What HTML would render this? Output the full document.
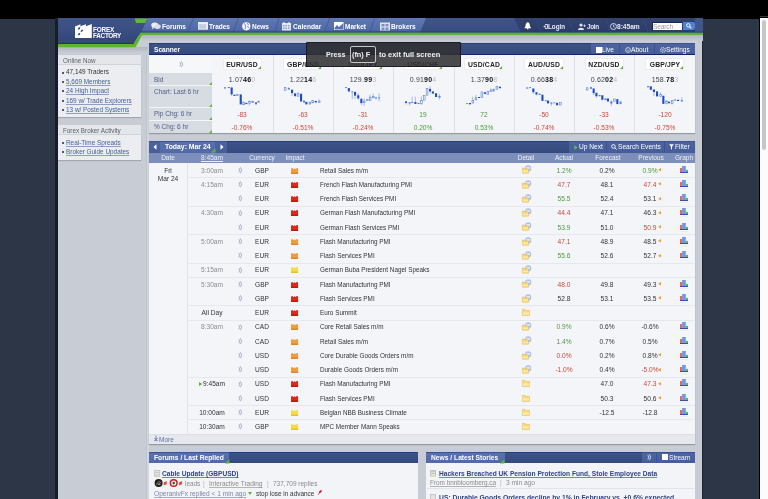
<!DOCTYPE html>
<html><head><meta charset="utf-8">
<style>
*{box-sizing:border-box;margin:0;padding:0}
html,body{-webkit-font-smoothing:antialiased;width:768px;height:499px;overflow:hidden;background:#2c3647;font-family:"Liberation Sans",sans-serif;color:#333;position:relative}
.a{position:absolute}
.t{position:absolute;white-space:nowrap;line-height:10px;height:10px;will-change:transform}
.u{text-decoration:underline}
svg{position:absolute;overflow:visible}
</style></head><body>

<div class="a" style="left:0px;top:0px;width:768px;height:18.5px;background:#000;"></div>
<div class="a" style="left:55px;top:18px;width:3px;height:481px;background:#171d2b;"></div>
<div class="a" style="left:58px;top:18px;width:645px;height:481px;background:#c8ccd4;"></div>
<div class="a" style="left:759px;top:18px;width:1px;height:481px;background:#000;"></div>
<div class="a" style="left:760px;top:18px;width:8px;height:481px;background:#fcfcfc;"></div>
<div class="a" style="left:760px;top:16.3px;width:8px;height:0.8px;background:#3a3a3a;"></div>
<div class="a" style="left:762.3px;top:20px;width:4px;height:129.5px;background:#c6c6c6;border-radius:2px;"></div>
<div class="a" style="left:702.3px;top:18px;width:0.8px;height:481px;background:#1f2633;"></div>
<div class="a" style="left:142px;top:35px;width:561px;height:6px;background:linear-gradient(#b2b6bf,#c8ccd4);"></div>
<div class="a" style="left:58px;top:47px;width:90px;height:6px;background:linear-gradient(#b2b6bf,#c8ccd4);"></div>
<svg class="a" style="left:58px;top:18px" width="645" height="30" viewBox="0 0 645 30">
<defs>
<linearGradient id="gl" x1="0" y1="0" x2="0" y2="1"><stop offset="0" stop-color="#405587"/><stop offset="1" stop-color="#33457a"/></linearGradient>
<linearGradient id="gn" x1="0" y1="0" x2="0" y2="1"><stop offset="0" stop-color="#5f78b4"/><stop offset="1" stop-color="#4d67a6"/></linearGradient>
<linearGradient id="gr" x1="0" y1="0" x2="0" y2="1"><stop offset="0" stop-color="#33436f"/><stop offset="1" stop-color="#2b3a69"/></linearGradient>
<linearGradient id="gm" x1="0" y1="0" x2="0" y2="1"><stop offset="0" stop-color="#40558a"/><stop offset="1" stop-color="#384b80"/></linearGradient>
</defs>
<rect x="0" y="0" width="645" height="17" fill="url(#gr)"/>
<polygon points="360,0 456,0 463,14.5 355,14.5" fill="url(#gm)"/>
<polygon points="89.8,0 368,0 362,14.4 82.6,14.4" fill="url(#gn)"/>
<polygon points="83.7,12.5 362.8,12.5 362,14.4 82.6,14.4" fill="#4d5ba3"/>
<polygon points="0,0 89.8,0 82.6,14.4 75.7,26.2 0,26.2" fill="url(#gl)"/>
<polygon points="0,25 76.4,25 75.7,26.2 0,26.2" fill="#2b2f6c"/>
<polygon points="76.6,0.6 89.4,0.6 87.2,5 78.2,5" fill="#5fb83a"/>
<polygon points="0,26.1 75.5,26.1 82.6,14.4 645,14.4 645,17.1 84.3,17.1 77.5,29.2 0,29.2" fill="#5cb531"/>
<g stroke="#3f5590" stroke-width="0.8">
<line x1="135.6" y1="0" x2="129.9" y2="14.5"/><line x1="180.6" y1="0" x2="174.8" y2="14.5"/>
<line x1="221" y1="0" x2="216.8" y2="14.5"/><line x1="271.8" y1="0" x2="266" y2="14.5"/>
<line x1="316.7" y1="0" x2="311.8" y2="14.5"/>
</g>
<g stroke="#3a4a80" stroke-width="0.8">
<line x1="478" y1="0" x2="482.6" y2="14.5"/><line x1="510.6" y1="0" x2="515.8" y2="14.5"/>
<line x1="548" y1="0" x2="552" y2="14.5"/><line x1="584.8" y1="0" x2="590.6" y2="14.5"/>
</g>
<rect x="637" y="0" width="8" height="14.3" fill="#42568e"/>
<rect x="82.6" y="13.4" width="562.4" height="1" fill="#2c3683" opacity="0.7"/>
</svg>
<svg class="a" style="left:74.8px;top:23.8px" width="17" height="14" viewBox="0 0 17 14">
<polygon points="0,2.6 5.4,0.2 5.4,2.2 11,0.2 11,2.2 16.8,0 16.8,13.9 0,13.9" fill="#fff"/>
<polygon points="3.6,3.6 5.4,3.3 4.6,5.3 2.8,5.6" fill="#23336a"/>
<polygon points="6.4,5.9 8.2,5.6 7.4,7.6 5.6,7.9" fill="#23336a"/>
<polygon points="3.6,9.2 5.4,8.9 4.6,10.9 2.8,11.2" fill="#23336a"/>
</svg>
<div class="t" style="left:92.8px;top:25.20px;font-size:6.4px;font-weight:bold;color:#fff;letter-spacing:-0.2px;">FOREX</div>
<div class="t" style="left:92.8px;top:31.00px;font-size:6.4px;font-weight:bold;color:#fff;letter-spacing:-0.3px;">FACTORY</div>
<div class="t" style="left:161.5px;top:22.20px;font-size:6.5px;font-weight:bold;color:#fff;">Forums</div>
<div class="t" style="left:208.7px;top:22.20px;font-size:6.5px;font-weight:bold;color:#fff;">Trades</div>
<div class="t" style="left:252.3px;top:22.20px;font-size:6.5px;font-weight:bold;color:#fff;">News</div>
<div class="t" style="left:292.7px;top:22.20px;font-size:6.6px;font-weight:bold;color:#fff;">Calendar</div>
<div class="t" style="left:344.5px;top:22.20px;font-size:6.5px;font-weight:bold;color:#fff;">Market</div>
<div class="t" style="left:391.3px;top:22.20px;font-size:6.56px;font-weight:bold;color:#fff;">Brokers</div>
<svg class="a" style="left:150.5px;top:22px" width="10" height="8" viewBox="0 0 10 8"><ellipse cx="3.8" cy="3" rx="3.6" ry="2.6" fill="#eef"/><ellipse cx="6.5" cy="4.6" rx="3.3" ry="2.4" fill="#dde"/><polygon points="1.5,5 1,7.5 3.5,5.3" fill="#eef"/></svg>
<svg class="a" style="left:197.6px;top:22.3px" width="10" height="7.6" viewBox="0 0 10 7.6"><rect x="0.4" y="0.4" width="9.2" height="6.8" fill="#c5cde3" stroke="#f4f6fb" stroke-width="0.8"/><path d="M0.8 1.6 L3 1.2 L5 2 L7 1.3 L9.2 1.1" stroke="#ffffff" stroke-width="0.9" fill="none"/><rect x="8.2" y="0.4" width="1.4" height="6.8" fill="#f4f6fb"/></svg>
<svg class="a" style="left:242.3px;top:22.2px" width="8.6" height="8.6" viewBox="0 0 8.6 8.6"><circle cx="4.3" cy="4.3" r="4.1" fill="#f2f4fa"/><path d="M2 1.6 C3 2.2 3.6 2.4 3.3 3.4 C3 4.2 3.8 4.6 3.6 5.6 L3 7 M5.5 1.2 C5.2 2.2 6 2.8 6.8 2.6 M5 4.6 C5.8 4.4 6.6 5 7 6" stroke="#5a72ae" stroke-width="0.9" fill="none"/></svg>
<svg class="a" style="left:282px;top:22px" width="9" height="8.5" viewBox="0 0 9 8.5"><rect x="0" y="1" width="9" height="7.5" fill="#dfe5f3"/><g fill="#8fa0c8"><rect x="1" y="3" width="1.5" height="1.5"/><rect x="3.5" y="3" width="1.5" height="1.5"/><rect x="6" y="3" width="1.5" height="1.5"/><rect x="1" y="5.5" width="1.5" height="1.5"/><rect x="3.5" y="5.5" width="1.5" height="1.5"/><rect x="6" y="5.5" width="1.5" height="1.5"/></g><rect x="1.5" y="0" width="1" height="2" fill="#fff"/><rect x="6.5" y="0" width="1" height="2" fill="#fff"/></svg>
<svg class="a" style="left:333.7px;top:22px" width="9.5" height="8" viewBox="0 0 9.5 8"><rect x="0" y="0" width="9.5" height="8" fill="#fff"/><path d="M0.5 6 L3 3 L5 5 L9 1.5 L9 7.5 L0.5 7.5Z" fill="#5a72ae"/></svg>
<svg class="a" style="left:379.6px;top:22px" width="10" height="8.5" viewBox="0 0 10 8.5"><rect x="0" y="0.5" width="10" height="8" fill="#dfe5f3"/><rect x="1.5" y="2" width="3" height="2.5" fill="#7b8fc0"/><rect x="5.5" y="2" width="3" height="2.5" fill="#7b8fc0"/><rect x="1.5" y="5.5" width="3" height="2.5" fill="#7b8fc0"/><rect x="5.5" y="5.5" width="3" height="2.5" fill="#7b8fc0"/></svg>
<svg class="a" style="left:523.7px;top:22.2px" width="7.5" height="7.5" viewBox="0 0 7.5 7.5"><path d="M3.75 0.3 C1.5 0.8 1.8 3 1.4 4.5 L0.3 6.2 L7.2 6.2 L6.1 4.5 C5.7 3 6 0.8 3.75 0.3Z" fill="#fff"/><circle cx="3.75" cy="6.8" r="0.8" fill="#fff"/></svg>
<svg class="a" style="left:543.2px;top:23.6px" width="5" height="5" viewBox="0 0 5 5"><path d="M2 0.5 H4.5 V4.5 H2" stroke="#dfe4f0" stroke-width="0.9" fill="none"/><polygon points="0.2,2.5 2.6,0.9 2.6,4.1" fill="#dfe4f0"/></svg>
<div class="t" style="left:548.4px;top:22.20px;font-size:6.3px;font-weight:bold;color:#e6eaf4;">Login</div>
<svg class="a" style="left:577.7px;top:22.5px" width="8" height="7" viewBox="0 0 8 7"><circle cx="3" cy="2" r="1.6" fill="#dfe4f0"/><path d="M0 7 C0 4 6 4 6 7Z" fill="#dfe4f0"/><path d="M6.5 1.5 V4 M5.3 2.7 H7.7" stroke="#dfe4f0" stroke-width="0.8"/></svg>
<div class="t" style="left:586.75px;top:22.20px;font-size:6.4px;font-weight:bold;color:#e6eaf4;letter-spacing:-0.35px;">Join</div>
<svg class="a" style="left:609.6px;top:22.8px" width="7" height="7" viewBox="0 0 7 7"><circle cx="3.5" cy="3.5" r="3" fill="none" stroke="#dfe4f0" stroke-width="0.9"/><path d="M3.5 1.6 V3.6 L5 4.3" stroke="#dfe4f0" stroke-width="0.8" fill="none"/></svg>
<div class="t" style="left:617.4px;top:22.20px;font-size:6.6px;font-weight:bold;color:#e6eaf4;">8:45am</div>
<div class="a" style="left:651.9px;top:21.9px;width:30.6px;height:8.5px;background:#fff;border-top:0.8px solid #1a2550;border-left:0.8px solid #1a2550;"></div>
<div class="t" style="left:653.4px;top:21.70px;font-size:6.5px;font-weight:normal;color:#9a9a9a;letter-spacing:-0.1px;">Search</div>
<div class="a" style="left:682.5px;top:21.9px;width:12.3px;height:8.5px;background:#4d82d4;border-radius:0 2px 2px 0;"></div>
<svg class="a" style="left:685.5px;top:23.3px" width="6" height="6" viewBox="0 0 6 6"><circle cx="2.3" cy="2.3" r="1.7" fill="none" stroke="#fff" stroke-width="0.9"/><path d="M3.5 3.5 L5.3 5.3" stroke="#fff" stroke-width="1.1"/></svg>
<div class="a" style="left:58px;top:55.1px;width:83px;height:10.3px;background:#e4e6ea;border-bottom:1px solid #cfd3da;"></div>
<div class="t" style="left:62.7px;top:56.05px;font-size:6.3px;font-weight:normal;color:#5a5f68;">Online Now</div>
<div class="a" style="left:58px;top:65.4px;width:83px;height:51.69999999999999px;background:#ebedf0;box-shadow:0 1px 1px rgba(0,0,0,0.18);"></div>
<div class="a" style="left:61.5px;top:72px;width:2px;height:2px;background:#5a5a5a;"></div>
<div class="t" style="left:66.1px;top:67.30px;font-size:6.4px;font-weight:normal;color:#333;">47,149 Traders</div>
<div class="a" style="left:61.5px;top:81px;width:2px;height:2px;background:#5a5a5a;"></div>
<div class="t" style="left:66.1px;top:76.80px;font-size:6.4px;font-weight:normal;color:#45609a;text-decoration:underline;text-decoration-color:#8f9fc4;">5,669 Members</div>
<div class="a" style="left:61.5px;top:90px;width:2px;height:2px;background:#5a5a5a;"></div>
<div class="t" style="left:66.1px;top:86.20px;font-size:6.4px;font-weight:normal;color:#45609a;text-decoration:underline;text-decoration-color:#8f9fc4;">24 High Impact</div>
<div class="a" style="left:61.5px;top:100px;width:2px;height:2px;background:#5a5a5a;"></div>
<div class="t" style="left:66.1px;top:95.60px;font-size:6.4px;font-weight:normal;color:#45609a;text-decoration:underline;text-decoration-color:#8f9fc4;">169 w/ Trade Explorers</div>
<div class="a" style="left:61.5px;top:109px;width:2px;height:2px;background:#5a5a5a;"></div>
<div class="t" style="left:66.1px;top:105.00px;font-size:6.4px;font-weight:normal;color:#45609a;text-decoration:underline;text-decoration-color:#8f9fc4;">13 w/ Posted Systems</div>
<div class="a" style="left:58px;top:125.1px;width:83px;height:10.1px;background:#e4e6ea;border-bottom:1px solid #cfd3da;"></div>
<div class="t" style="left:62.7px;top:125.95px;font-size:6.3px;font-weight:normal;color:#5a5f68;">Forex Broker Activity</div>
<div class="a" style="left:58px;top:135.2px;width:83px;height:24.800000000000004px;background:#ebedf0;box-shadow:0 1px 1px rgba(0,0,0,0.18);"></div>
<div class="a" style="left:61.5px;top:142px;width:2px;height:2px;background:#5a5a5a;"></div>
<div class="t" style="left:66.1px;top:137.50px;font-size:6.4px;font-weight:normal;color:#45609a;text-decoration:underline;text-decoration-color:#8f9fc4;">Real-Time Spreads</div>
<div class="a" style="left:61.5px;top:151px;width:2px;height:2px;background:#5a5a5a;"></div>
<div class="t" style="left:66.1px;top:146.60px;font-size:6.4px;font-weight:normal;color:#45609a;text-decoration:underline;text-decoration-color:#8f9fc4;">Broker Guide Updates</div>
<div class="a" style="left:146.3px;top:55px;width:1px;height:444px;background:#bfc3cb;"></div>
<div class="a" style="left:147.3px;top:55px;width:1.5px;height:444px;background:#d2d6dd;"></div>
<div class="a" style="left:148.8px;top:54.8px;width:546.0px;height:78.39999999999998px;background:#f3f5f8;box-shadow:0 1px 1px rgba(0,0,0,0.25);"></div>
<div class="a" style="left:148.8px;top:43.4px;width:546.0px;height:11.4px;background:linear-gradient(#3d5388,#34497e);border-top:1px solid #223f7a;"></div>
<div class="t" style="left:153.5px;top:45.00px;font-size:6.6px;font-weight:bold;color:#fff;">Scanner</div>
<div class="a" style="left:590.9px;top:43.4px;width:103.89999999999998px;height:11.4px;background:linear-gradient(#4d64a0,#465d99);border-top:1px solid #3a5290;"></div>
<div class="a" style="left:619px;top:44.4px;width:0.8px;height:10.4px;background:#3b5190;"></div>
<div class="a" style="left:654.2px;top:44.4px;width:0.8px;height:10.4px;background:#3b5190;"></div>
<div class="a" style="left:595.6px;top:46.6px;width:6.2px;height:6px;background:#fff;"></div>
<div class="t" style="left:602.3px;top:45.20px;font-size:6.5px;font-weight:normal;color:#fff;">Live</div>
<svg class="a" style="left:624.5px;top:46.5px" width="6" height="6" viewBox="0 0 6 6"><circle cx="3" cy="3" r="2.4" fill="none" stroke="#dfe4f0" stroke-width="0.8"/><rect x="2.6" y="2.4" width="0.8" height="2" fill="#dfe4f0"/></svg>
<div class="t" style="left:631.2px;top:45.20px;font-size:6.6px;font-weight:normal;color:#fff;">About</div>
<svg class="a" style="left:659.7px;top:46.5px" width="6" height="6" viewBox="0 0 6 6"><circle cx="3" cy="3" r="2.3" fill="none" stroke="#dfe4f0" stroke-width="1.1" stroke-dasharray="1 0.6"/><circle cx="3" cy="3" r="0.8" fill="#dfe4f0"/></svg>
<div class="t" style="left:666px;top:45.20px;font-size:6.6px;font-weight:normal;color:#fff;">Settings</div>
<div class="a" style="left:148.8px;top:53.9px;width:546.0px;height:0.9px;background:#13236e;"></div>
<div class="a" style="left:148.8px;top:54.8px;width:63.39999999999998px;height:17.9px;background:#f6f7f9;"></div>
<div class="a" style="left:148.8px;top:73.3px;width:63.39999999999998px;height:11.999999999999995px;background:#d7dbe2;"></div>
<svg class="a" style="left:208.7px;top:82.3px" width="3" height="3" viewBox="0 0 3 3"><polygon points="3,0 3,3 0,3" fill="#5cb531"/></svg>
<div class="a" style="left:148.8px;top:85.89999999999999px;width:63.39999999999998px;height:21.1px;background:#d7dbe2;"></div>
<svg class="a" style="left:208.7px;top:104.0px" width="3" height="3" viewBox="0 0 3 3"><polygon points="3,0 3,3 0,3" fill="#5cb531"/></svg>
<div class="a" style="left:148.8px;top:107.6px;width:63.39999999999998px;height:12.300000000000006px;background:#d7dbe2;"></div>
<svg class="a" style="left:208.7px;top:116.9px" width="3" height="3" viewBox="0 0 3 3"><polygon points="3,0 3,3 0,3" fill="#5cb531"/></svg>
<div class="a" style="left:148.8px;top:120.5px;width:63.39999999999998px;height:12.699999999999983px;background:#d7dbe2;"></div>
<svg class="a" style="left:208.7px;top:130.2px" width="3" height="3" viewBox="0 0 3 3"><polygon points="3,0 3,3 0,3" fill="#5cb531"/></svg>
<div class="t" style="left:153.5px;top:74.80px;font-size:6.5px;font-weight:normal;color:#4e5d84;">Bid</div>
<div class="t" style="left:153.5px;top:87.30px;font-size:6.5px;font-weight:normal;color:#4e5d84;">Chart: Last 6 hr</div>
<div class="t" style="left:153.5px;top:109.40px;font-size:6.5px;font-weight:normal;color:#4e5d84;">Pip Chg: 6 hr</div>
<div class="t" style="left:153.5px;top:122.40px;font-size:6.5px;font-weight:normal;color:#4e5d84;">% Chg: 6 hr</div>
<svg class="a" style="left:178.5px;top:60.5px" width="5" height="7" viewBox="0 0 5 7"><path d="M0.9 1.2 Q2.5 3.2 0.9 5.4" stroke="#9aa6c2" stroke-width="0.9" fill="none"/><path d="M2.4 0.4 Q5 3.2 2.4 6.2" stroke="#9aa6c2" stroke-width="0.9" fill="none"/></svg>
<div class="a" style="left:223.7625px;top:58.9px;width:37.2px;height:10.1px;background:#fff;box-shadow:0 0 0 0.5px #e3e6ec;"></div>
<svg class="a" style="left:257.9625px;top:66px" width="3" height="3" viewBox="0 0 3 3"><polygon points="3,0 3,3 0,3" fill="#5cb531"/></svg>
<div class="t" style="left:92.36249999999998px;width:300px;text-align:center;top:59.80px;font-size:6.8px;font-weight:bold;color:#222;letter-spacing:0.15px;">EUR/USD</div>
<div class="t" style="left:92.36249999999998px;width:300px;text-align:center;top:75.10px;font-size:7.0px;font-weight:normal;color:#444;letter-spacing:0.2px;">1.07<b style="color:#111">46</b><span style="color:#bbb">0</span></div>
<div class="t" style="left:92.36249999999998px;width:300px;text-align:center;top:110.20px;font-size:6.6px;font-weight:normal;color:#c9483b;">-83</div>
<div class="t" style="left:92.36249999999998px;width:300px;text-align:center;top:122.80px;font-size:6.6px;font-weight:normal;color:#c9483b;">-0.76%</div>
<div class="a" style="left:272.525px;top:54.8px;width:0.8px;height:78.39999999999999px;background:#dde1e8;"></div>
<div class="a" style="left:284.0875px;top:58.9px;width:37.2px;height:10.1px;background:#fff;box-shadow:0 0 0 0.5px #e3e6ec;"></div>
<svg class="a" style="left:318.2875px;top:66px" width="3" height="3" viewBox="0 0 3 3"><polygon points="3,0 3,3 0,3" fill="#5cb531"/></svg>
<div class="t" style="left:152.6875px;width:300px;text-align:center;top:59.80px;font-size:6.8px;font-weight:bold;color:#222;letter-spacing:0.15px;">GBP/USD</div>
<div class="t" style="left:152.6875px;width:300px;text-align:center;top:75.10px;font-size:7.0px;font-weight:normal;color:#444;letter-spacing:0.2px;">1.22<b style="color:#111">14</b><span style="color:#bbb">6</span></div>
<div class="t" style="left:152.6875px;width:300px;text-align:center;top:110.20px;font-size:6.6px;font-weight:normal;color:#c9483b;">-63</div>
<div class="t" style="left:152.6875px;width:300px;text-align:center;top:122.80px;font-size:6.6px;font-weight:normal;color:#c9483b;">-0.51%</div>
<div class="a" style="left:332.84999999999997px;top:54.8px;width:0.8px;height:78.39999999999999px;background:#dde1e8;"></div>
<div class="a" style="left:344.41249999999997px;top:58.9px;width:37.2px;height:10.1px;background:#fff;box-shadow:0 0 0 0.5px #e3e6ec;"></div>
<svg class="a" style="left:378.6125px;top:66px" width="3" height="3" viewBox="0 0 3 3"><polygon points="3,0 3,3 0,3" fill="#5cb531"/></svg>
<div class="t" style="left:213.0125px;width:300px;text-align:center;top:59.80px;font-size:6.8px;font-weight:bold;color:#222;letter-spacing:0.15px;">USD/JPY</div>
<div class="t" style="left:213.0125px;width:300px;text-align:center;top:75.10px;font-size:7.0px;font-weight:normal;color:#444;letter-spacing:0.2px;">129.<b style="color:#111">99</b><span style="color:#bbb">3</span></div>
<div class="t" style="left:213.0125px;width:300px;text-align:center;top:110.20px;font-size:6.6px;font-weight:normal;color:#c9483b;">-31</div>
<div class="t" style="left:213.0125px;width:300px;text-align:center;top:122.80px;font-size:6.6px;font-weight:normal;color:#c9483b;">-0.24%</div>
<div class="a" style="left:393.17499999999995px;top:54.8px;width:0.8px;height:78.39999999999999px;background:#dde1e8;"></div>
<div class="a" style="left:404.73749999999995px;top:58.9px;width:37.2px;height:10.1px;background:#fff;box-shadow:0 0 0 0.5px #e3e6ec;"></div>
<svg class="a" style="left:438.9375px;top:66px" width="3" height="3" viewBox="0 0 3 3"><polygon points="3,0 3,3 0,3" fill="#5cb531"/></svg>
<div class="t" style="left:273.3375px;width:300px;text-align:center;top:59.80px;font-size:6.8px;font-weight:bold;color:#222;letter-spacing:0.15px;">USD/CHF</div>
<div class="t" style="left:273.3375px;width:300px;text-align:center;top:75.10px;font-size:7.0px;font-weight:normal;color:#444;letter-spacing:0.2px;">0.91<b style="color:#111">90</b><span style="color:#bbb">4</span></div>
<div class="t" style="left:273.3375px;width:300px;text-align:center;top:110.20px;font-size:6.6px;font-weight:normal;color:#4d9a3c;">19</div>
<div class="t" style="left:273.3375px;width:300px;text-align:center;top:122.80px;font-size:6.6px;font-weight:normal;color:#4d9a3c;">0.20%</div>
<div class="a" style="left:453.5px;top:54.8px;width:0.8px;height:78.39999999999999px;background:#dde1e8;"></div>
<div class="a" style="left:465.0625px;top:58.9px;width:37.2px;height:10.1px;background:#fff;box-shadow:0 0 0 0.5px #e3e6ec;"></div>
<svg class="a" style="left:499.26250000000005px;top:66px" width="3" height="3" viewBox="0 0 3 3"><polygon points="3,0 3,3 0,3" fill="#5cb531"/></svg>
<div class="t" style="left:333.6625px;width:300px;text-align:center;top:59.80px;font-size:6.8px;font-weight:bold;color:#222;letter-spacing:0.15px;">USD/CAD</div>
<div class="t" style="left:333.6625px;width:300px;text-align:center;top:75.10px;font-size:7.0px;font-weight:normal;color:#444;letter-spacing:0.2px;">1.37<b style="color:#111">90</b><span style="color:#bbb">8</span></div>
<div class="t" style="left:333.6625px;width:300px;text-align:center;top:110.20px;font-size:6.6px;font-weight:normal;color:#4d9a3c;">72</div>
<div class="t" style="left:333.6625px;width:300px;text-align:center;top:122.80px;font-size:6.6px;font-weight:normal;color:#4d9a3c;">0.53%</div>
<div class="a" style="left:513.825px;top:54.8px;width:0.8px;height:78.39999999999999px;background:#dde1e8;"></div>
<div class="a" style="left:525.3875px;top:58.9px;width:37.2px;height:10.1px;background:#fff;box-shadow:0 0 0 0.5px #e3e6ec;"></div>
<svg class="a" style="left:559.5875000000001px;top:66px" width="3" height="3" viewBox="0 0 3 3"><polygon points="3,0 3,3 0,3" fill="#5cb531"/></svg>
<div class="t" style="left:393.98750000000007px;width:300px;text-align:center;top:59.80px;font-size:6.8px;font-weight:bold;color:#222;letter-spacing:0.15px;">AUD/USD</div>
<div class="t" style="left:393.98750000000007px;width:300px;text-align:center;top:75.10px;font-size:7.0px;font-weight:normal;color:#444;letter-spacing:0.2px;">0.66<b style="color:#111">38</b><span style="color:#bbb">4</span></div>
<div class="t" style="left:393.98750000000007px;width:300px;text-align:center;top:110.20px;font-size:6.6px;font-weight:normal;color:#c9483b;">-50</div>
<div class="t" style="left:393.98750000000007px;width:300px;text-align:center;top:122.80px;font-size:6.6px;font-weight:normal;color:#c9483b;">-0.74%</div>
<div class="a" style="left:574.15px;top:54.8px;width:0.8px;height:78.39999999999999px;background:#dde1e8;"></div>
<div class="a" style="left:585.7125px;top:58.9px;width:37.2px;height:10.1px;background:#fff;box-shadow:0 0 0 0.5px #e3e6ec;"></div>
<svg class="a" style="left:619.9125px;top:66px" width="3" height="3" viewBox="0 0 3 3"><polygon points="3,0 3,3 0,3" fill="#5cb531"/></svg>
<div class="t" style="left:454.3125px;width:300px;text-align:center;top:59.80px;font-size:6.8px;font-weight:bold;color:#222;letter-spacing:0.15px;">NZD/USD</div>
<div class="t" style="left:454.3125px;width:300px;text-align:center;top:75.10px;font-size:7.0px;font-weight:normal;color:#444;letter-spacing:0.2px;">0.62<b style="color:#111">02</b><span style="color:#bbb">4</span></div>
<div class="t" style="left:454.3125px;width:300px;text-align:center;top:110.20px;font-size:6.6px;font-weight:normal;color:#c9483b;">-33</div>
<div class="t" style="left:454.3125px;width:300px;text-align:center;top:122.80px;font-size:6.6px;font-weight:normal;color:#c9483b;">-0.53%</div>
<div class="a" style="left:634.4749999999999px;top:54.8px;width:0.8px;height:78.39999999999999px;background:#dde1e8;"></div>
<div class="a" style="left:646.0374999999999px;top:58.9px;width:37.2px;height:10.1px;background:#fff;box-shadow:0 0 0 0.5px #e3e6ec;"></div>
<svg class="a" style="left:680.2375px;top:66px" width="3" height="3" viewBox="0 0 3 3"><polygon points="3,0 3,3 0,3" fill="#5cb531"/></svg>
<div class="t" style="left:514.6374999999999px;width:300px;text-align:center;top:59.80px;font-size:6.8px;font-weight:bold;color:#222;letter-spacing:0.15px;">GBP/JPY</div>
<div class="t" style="left:514.6374999999999px;width:300px;text-align:center;top:75.10px;font-size:7.0px;font-weight:normal;color:#444;letter-spacing:0.2px;">158.<b style="color:#111">78</b><span style="color:#bbb">3</span></div>
<div class="t" style="left:514.6374999999999px;width:300px;text-align:center;top:110.20px;font-size:6.6px;font-weight:normal;color:#c9483b;">-120</div>
<div class="t" style="left:514.6374999999999px;width:300px;text-align:center;top:122.80px;font-size:6.6px;font-weight:normal;color:#c9483b;">-0.75%</div>
<svg class="a" style="left:224px;top:86.5px" width="40" height="20" viewBox="0 0 40 20"><rect x="0" y="0.3" width="2" height="1.2" fill="#4a72d4"/><rect x="3.8" y="0" width="2" height="1.1" fill="#4a72d4"/><line x1="7.6" y1="0.5" x2="7.6" y2="8.9" stroke="#6a88d6" stroke-width="0.55"/><rect x="6.6" y="0.5" width="2.1" height="6.9" fill="#1a4ccc"/><rect x="9.4" y="7.7" width="2.1" height="1.2000000000000002" fill="#1a4ccc"/><rect x="12.55" y="7.35" width="1.7" height="1.3000000000000007" fill="#e8eefa" stroke="#5f82d6" stroke-width="0.6"/><rect x="15.7" y="7.4" width="2.1" height="9.999999999999998" fill="#1a4ccc"/><rect x="18.8" y="15.15" width="1.7" height="2.5999999999999996" fill="#e8eefa" stroke="#5f82d6" stroke-width="0.6"/><rect x="21.3" y="15.8" width="2.1" height="1.3000000000000007" fill="#1a4ccc"/><line x1="25.4" y1="13.9" x2="25.4" y2="18.6" stroke="#6a88d6" stroke-width="0.55"/><rect x="24.7" y="14.15" width="1.7" height="2.3499999999999996" fill="#e8eefa" stroke="#5f82d6" stroke-width="0.6"/><rect x="27.6" y="14.25" width="2.1" height="1.25" fill="#1a4ccc"/><rect x="31" y="15.2" width="2" height="2.1999999999999993" fill="#4a72d4"/><rect x="33.8" y="14.15" width="1.7" height="1.0999999999999996" fill="#e8eefa" stroke="#5f82d6" stroke-width="0.6"/></svg>
<svg class="a" style="left:284px;top:86.5px" width="40" height="20" viewBox="0 0 40 20"><rect x="0.3" y="0.45" width="1.7" height="2.9" fill="#e8eefa" stroke="#5f82d6" stroke-width="0.6"/><line x1="4.8" y1="0.2" x2="4.8" y2="2.1" stroke="#6a88d6" stroke-width="0.55"/><rect x="3.8" y="1.4" width="2.1" height="1" fill="#1a4ccc"/><line x1="8" y1="2.7" x2="8" y2="8.9" stroke="#6a88d6" stroke-width="0.55"/><rect x="7" y="2.7" width="2.1" height="3.3999999999999995" fill="#1a4ccc"/><rect x="10" y="6.4" width="2.1" height="2.8499999999999996" fill="#1a4ccc"/><rect x="13.200000000000001" y="6.05" width="1.7" height="3.2" fill="#e8eefa" stroke="#5f82d6" stroke-width="0.6"/><rect x="16" y="6.75" width="2.1" height="7.75" fill="#1a4ccc"/><rect x="19.1" y="13.6" width="2" height="1.9000000000000004" fill="#4a72d4"/><rect x="21.3" y="14.9" width="2.1" height="2.4999999999999982" fill="#1a4ccc"/><line x1="25.75" y1="14.9" x2="25.75" y2="18" stroke="#6a88d6" stroke-width="0.55"/><rect x="25.05" y="15.15" width="1.7" height="1.700000000000001" fill="#e8eefa" stroke="#5f82d6" stroke-width="0.6"/><rect x="27.900000000000002" y="13.55" width="1.7" height="2.3000000000000007" fill="#e8eefa" stroke="#5f82d6" stroke-width="0.6"/><rect x="30.7" y="13.9" width="2.1" height="1.5999999999999996" fill="#1a4ccc"/><line x1="35.1" y1="12.1" x2="35.1" y2="15.5" stroke="#6a88d6" stroke-width="0.55"/><rect x="34.4" y="14.15" width="1.7" height="1.0999999999999996" fill="#e8eefa" stroke="#5f82d6" stroke-width="0.6"/></svg>
<svg class="a" style="left:345px;top:86.5px" width="40" height="20" viewBox="0 0 40 20"><rect x="0" y="0.2" width="2" height="0.9000000000000001" fill="#4a72d4"/><rect x="2.8" y="1.1" width="2.1" height="3.4" fill="#1a4ccc"/><line x1="7.25" y1="4.5" x2="7.25" y2="12.1" stroke="#6a88d6" stroke-width="0.55"/><rect x="6.25" y="4.5" width="2" height="0.8" fill="#4a72d4"/><line x1="10" y1="4.9" x2="10" y2="12.1" stroke="#6a88d6" stroke-width="0.55"/><rect x="9" y="4.9" width="2.1" height="3.6999999999999993" fill="#1a4ccc"/><line x1="13.2" y1="6.1" x2="13.2" y2="12.7" stroke="#6a88d6" stroke-width="0.55"/><rect x="12.2" y="8.3" width="2.1" height="3.0999999999999996" fill="#1a4ccc"/><line x1="16.3" y1="11.75" x2="16.3" y2="18" stroke="#6a88d6" stroke-width="0.55"/><rect x="15.3" y="11.75" width="2.1" height="4.350000000000001" fill="#1a4ccc"/><line x1="19.1" y1="11.4" x2="19.1" y2="18.9" stroke="#6a88d6" stroke-width="0.55"/><rect x="18.400000000000002" y="14.15" width="1.7" height="1.4000000000000004" fill="#e8eefa" stroke="#5f82d6" stroke-width="0.6"/><rect x="21.55" y="12.35" width="1.7" height="1.3000000000000007" fill="#e8eefa" stroke="#5f82d6" stroke-width="0.6"/><line x1="25" y1="7.7" x2="25" y2="13.9" stroke="#6a88d6" stroke-width="0.55"/><rect x="24.3" y="10.15" width="1.7" height="3.5" fill="#e8eefa" stroke="#5f82d6" stroke-width="0.6"/><line x1="28.2" y1="6.75" x2="28.2" y2="11.1" stroke="#6a88d6" stroke-width="0.55"/><rect x="27.5" y="9.5" width="1.7" height="1.3499999999999996" fill="#e8eefa" stroke="#5f82d6" stroke-width="0.6"/><line x1="31" y1="10" x2="31" y2="12.7" stroke="#6a88d6" stroke-width="0.55"/><rect x="30" y="10.5" width="2" height="0.8" fill="#4a72d4"/><line x1="34.1" y1="6.4" x2="34.1" y2="14.25" stroke="#6a88d6" stroke-width="0.55"/><rect x="33.1" y="10.5" width="2" height="0.8" fill="#4a72d4"/></svg>
<svg class="a" style="left:405.4px;top:86px" width="40" height="20" viewBox="0 0 40 20"><line x1="1" y1="15.4" x2="1" y2="18.5" stroke="#6a88d6" stroke-width="0.55"/><rect x="0" y="15.4" width="2.1" height="1.4999999999999982" fill="#1a4ccc"/><line x1="4.7" y1="16.3" x2="4.7" y2="19.4" stroke="#6a88d6" stroke-width="0.55"/><rect x="3.7" y="16.3" width="2" height="1.1999999999999993" fill="#4a72d4"/><line x1="7.2" y1="10.7" x2="7.2" y2="16.9" stroke="#6a88d6" stroke-width="0.55"/><rect x="6.2" y="16" width="2" height="0.8999999999999986" fill="#4a72d4"/><line x1="10.35" y1="10.7" x2="10.35" y2="17.9" stroke="#6a88d6" stroke-width="0.55"/><rect x="9.35" y="16" width="2.1" height="1.8999999999999986" fill="#1a4ccc"/><rect x="12.5" y="16.9" width="2" height="1.0" fill="#4a72d4"/><line x1="16.3" y1="10.4" x2="16.3" y2="19" stroke="#6a88d6" stroke-width="0.55"/><rect x="15.600000000000001" y="14.65" width="1.7" height="2.700000000000001" fill="#e8eefa" stroke="#5f82d6" stroke-width="0.6"/><rect x="18.400000000000002" y="9.65" width="1.7" height="4.5" fill="#e8eefa" stroke="#5f82d6" stroke-width="0.6"/><rect x="21.2" y="2.5" width="1.7" height="6.65" fill="#e8eefa" stroke="#5f82d6" stroke-width="0.6"/><line x1="25" y1="0.4" x2="25" y2="7.5" stroke="#6a88d6" stroke-width="0.55"/><rect x="24" y="2.9" width="2.1" height="2.5000000000000004" fill="#1a4ccc"/><rect x="26.85" y="5.4" width="2.1" height="2.1999999999999993" fill="#1a4ccc"/><rect x="30" y="7.25" width="2.1" height="3.75" fill="#1a4ccc"/><line x1="34.4" y1="8" x2="34.4" y2="13.5" stroke="#6a88d6" stroke-width="0.55"/><rect x="33.699999999999996" y="10.25" width="1.7" height="1.0999999999999996" fill="#e8eefa" stroke="#5f82d6" stroke-width="0.6"/></svg>
<svg class="a" style="left:466px;top:86px" width="40" height="20" viewBox="0 0 40 20"><rect x="0" y="17.25" width="2" height="0.8" fill="#4a72d4"/><line x1="3.9" y1="17" x2="3.9" y2="19" stroke="#6a88d6" stroke-width="0.55"/><rect x="2.9" y="17" width="2.1" height="1.1999999999999993" fill="#1a4ccc"/><line x1="6.7" y1="10.7" x2="6.7" y2="17.25" stroke="#6a88d6" stroke-width="0.55"/><rect x="6.0" y="14.35" width="1.7" height="2.6500000000000004" fill="#e8eefa" stroke="#5f82d6" stroke-width="0.6"/><line x1="9.8" y1="9.1" x2="9.8" y2="14.1" stroke="#6a88d6" stroke-width="0.55"/><rect x="9.100000000000001" y="11.85" width="1.7" height="2.0" fill="#e8eefa" stroke="#5f82d6" stroke-width="0.6"/><rect x="12" y="11" width="2.1" height="1" fill="#1a4ccc"/><rect x="15.05" y="5.95" width="1.7" height="5.3999999999999995" fill="#e8eefa" stroke="#5f82d6" stroke-width="0.6"/><rect x="17.9" y="6.3" width="2.1" height="1.6000000000000005" fill="#1a4ccc"/><rect x="21.0" y="5.65" width="1.7" height="2.5999999999999996" fill="#e8eefa" stroke="#5f82d6" stroke-width="0.6"/><line x1="24.8" y1="2.25" x2="24.8" y2="5.7" stroke="#6a88d6" stroke-width="0.55"/><rect x="24.1" y="4.05" width="1.7" height="1.4000000000000004" fill="#e8eefa" stroke="#5f82d6" stroke-width="0.6"/><rect x="26.900000000000002" y="3.15" width="1.7" height="2.0000000000000004" fill="#e8eefa" stroke="#5f82d6" stroke-width="0.6"/><rect x="30.05" y="0.65" width="1.7" height="2.6" fill="#e8eefa" stroke="#5f82d6" stroke-width="0.6"/><rect x="32.9" y="0.7" width="2.1" height="1.55" fill="#1a4ccc"/></svg>
<svg class="a" style="left:526px;top:86.5px" width="40" height="20" viewBox="0 0 40 20"><rect x="0.3" y="0.75" width="1.7" height="0.75" fill="#e8eefa" stroke="#5f82d6" stroke-width="0.6"/><rect x="3.2" y="0.2" width="2" height="0.9000000000000001" fill="#4a72d4"/><line x1="7.3" y1="1.5" x2="7.3" y2="6.75" stroke="#6a88d6" stroke-width="0.55"/><rect x="6.3" y="1.5" width="2.1" height="3.7" fill="#1a4ccc"/><line x1="10.4" y1="5.2" x2="10.4" y2="8.6" stroke="#6a88d6" stroke-width="0.55"/><rect x="9.4" y="5.2" width="2.1" height="2.2" fill="#1a4ccc"/><rect x="12.6" y="6.75" width="2" height="1.25" fill="#4a72d4"/><rect x="15.4" y="7.7" width="2.1" height="6.2" fill="#1a4ccc"/><rect x="18.8" y="13.3" width="2" height="0.9499999999999993" fill="#4a72d4"/><rect x="21" y="13.6" width="2.1" height="2.799999999999999" fill="#1a4ccc"/><line x1="25.4" y1="15.5" x2="25.4" y2="18.9" stroke="#6a88d6" stroke-width="0.55"/><rect x="24.4" y="15.5" width="2" height="1.0" fill="#4a72d4"/><rect x="27.25" y="15.5" width="2" height="0.8" fill="#4a72d4"/><rect x="30" y="15.8" width="2.1" height="2.5" fill="#1a4ccc"/><rect x="33.5" y="15.45" width="1.7" height="2.6000000000000014" fill="#e8eefa" stroke="#5f82d6" stroke-width="0.6"/></svg>
<svg class="a" style="left:586.4px;top:86.5px" width="40" height="20" viewBox="0 0 40 20"><rect x="0.3" y="0.75" width="1.7" height="2.3" fill="#e8eefa" stroke="#5f82d6" stroke-width="0.6"/><rect x="4" y="0.2" width="2" height="1.55" fill="#4a72d4"/><line x1="7.6" y1="1.5" x2="7.6" y2="8" stroke="#6a88d6" stroke-width="0.55"/><rect x="6.6" y="1.5" width="2.1" height="4.6" fill="#1a4ccc"/><line x1="10.35" y1="5.8" x2="10.35" y2="10.8" stroke="#6a88d6" stroke-width="0.55"/><rect x="9.35" y="5.8" width="2.1" height="3.45" fill="#1a4ccc"/><rect x="12.8" y="8.25" width="1.7" height="0.75" fill="#e8eefa" stroke="#5f82d6" stroke-width="0.6"/><line x1="16.3" y1="8.3" x2="16.3" y2="13.6" stroke="#6a88d6" stroke-width="0.55"/><rect x="15.3" y="8.3" width="2.1" height="4.399999999999999" fill="#1a4ccc"/><rect x="18.7" y="11.75" width="1.7" height="1.0" fill="#e8eefa" stroke="#5f82d6" stroke-width="0.6"/><rect x="20.9" y="11.5" width="2.1" height="3.0" fill="#1a4ccc"/><line x1="25.35" y1="13.3" x2="25.35" y2="18.9" stroke="#6a88d6" stroke-width="0.55"/><rect x="24.35" y="14.5" width="2" height="2.0" fill="#4a72d4"/><rect x="27.5" y="12.0" width="1.7" height="2.25" fill="#e8eefa" stroke="#5f82d6" stroke-width="0.6"/><rect x="30.3" y="12.1" width="2.1" height="5.000000000000002" fill="#1a4ccc"/><rect x="33.8" y="14.75" width="1.7" height="2.1000000000000014" fill="#e8eefa" stroke="#5f82d6" stroke-width="0.6"/></svg>
<svg class="a" style="left:647px;top:86px" width="40" height="20" viewBox="0 0 40 20"><rect x="0.3" y="0.25" width="1.7" height="0.8" fill="#e8eefa" stroke="#5f82d6" stroke-width="0.6"/><rect x="2.8" y="0.4" width="2.1" height="3.4" fill="#1a4ccc"/><line x1="6.9" y1="3.5" x2="6.9" y2="10" stroke="#6a88d6" stroke-width="0.55"/><rect x="5.9" y="3.5" width="2.1" height="2.5" fill="#1a4ccc"/><rect x="9" y="5.4" width="2.1" height="5.0" fill="#1a4ccc"/><line x1="13.5" y1="6.6" x2="13.5" y2="10.7" stroke="#6a88d6" stroke-width="0.55"/><rect x="12.8" y="8.45" width="1.7" height="2.0" fill="#e8eefa" stroke="#5f82d6" stroke-width="0.6"/><rect x="15.3" y="9.75" width="2.1" height="8.149999999999999" fill="#1a4ccc"/><line x1="19.4" y1="14.75" x2="19.4" y2="18.5" stroke="#6a88d6" stroke-width="0.55"/><rect x="18.7" y="15.0" width="1.7" height="2.3500000000000014" fill="#e8eefa" stroke="#5f82d6" stroke-width="0.6"/><rect x="21" y="15.7" width="2.1" height="1.5500000000000007" fill="#1a4ccc"/><line x1="25" y1="14.1" x2="25" y2="18.5" stroke="#6a88d6" stroke-width="0.55"/><rect x="24.3" y="14.35" width="1.7" height="3.0000000000000018" fill="#e8eefa" stroke="#5f82d6" stroke-width="0.6"/><rect x="27.2" y="13.75" width="1.7" height="0.75" fill="#e8eefa" stroke="#5f82d6" stroke-width="0.6"/><rect x="30" y="13.8" width="2.1" height="1.1999999999999993" fill="#1a4ccc"/><line x1="34.75" y1="11.6" x2="34.75" y2="15.4" stroke="#6a88d6" stroke-width="0.55"/><rect x="34.05" y="14.25" width="1.7" height="0.9000000000000004" fill="#e8eefa" stroke="#5f82d6" stroke-width="0.6"/></svg>
<div class="a" style="left:148.8px;top:140.9px;width:546.0px;height:302.79999999999995px;background:#f4f5f9;box-shadow:0 1px 1px rgba(0,0,0,0.25);"></div>
<div class="a" style="left:148.8px;top:140.9px;width:546.0px;height:11.7px;background:linear-gradient(#3d5388,#34497e);border-top:1px solid #223f7a;"></div>
<div class="a" style="left:148.8px;top:140.9px;width:11.6px;height:11.7px;background:linear-gradient(#4d64a0,#465d99);border-top:1px solid #3a5290;"></div>
<div class="a" style="left:160.4px;top:140.9px;width:54.9px;height:11.7px;background:linear-gradient(#5972ae,#5169a6);border-top:1px solid #3a5290;"></div>
<div class="a" style="left:215.3px;top:140.9px;width:11.7px;height:11.7px;background:linear-gradient(#4d64a0,#465d99);border-top:1px solid #3a5290;"></div>
<svg class="a" style="left:152.5px;top:144px" width="4" height="6" viewBox="0 0 4 6"><polygon points="3.5,0.3 3.5,5.7 0.5,3" fill="#fff"/></svg>
<svg class="a" style="left:219.5px;top:144px" width="4" height="6" viewBox="0 0 4 6"><polygon points="0.5,0.3 0.5,5.7 3.5,3" fill="#fff"/></svg>
<svg class="a" style="left:210.8px;top:148.2px" width="4.5" height="4.5" viewBox="0 0 3 3"><polygon points="3,0 3,3 0,3" fill="#5cb531"/></svg>
<div class="t" style="left:165.0px;top:142.20px;font-size:6.85px;font-weight:bold;color:#fff;">Today: Mar 24</div>
<div class="a" style="left:569px;top:140.9px;width:125.79999999999995px;height:11.7px;background:linear-gradient(#4d64a0,#465d99);border-top:1px solid #3a5290;"></div>
<div class="a" style="left:605.5px;top:141.9px;width:0.8px;height:10.7px;background:#3b5190;"></div>
<div class="a" style="left:663.5px;top:141.9px;width:0.8px;height:10.7px;background:#3b5190;"></div>
<svg class="a" style="left:573.5px;top:144.5px" width="4" height="5" viewBox="0 0 4 5"><polygon points="0.3,0.3 0.3,4.7 3.7,2.5" fill="#5cc23a"/></svg>
<div class="t" style="left:578.5px;top:142.20px;font-size:6.6px;font-weight:normal;color:#fff;">Up Next</div>
<svg class="a" style="left:610.5px;top:143.8px" width="6" height="6" viewBox="0 0 6 6"><circle cx="2.4" cy="2.4" r="1.8" fill="none" stroke="#fff" stroke-width="0.9"/><path d="M3.7 3.7 L5.6 5.6" stroke="#fff" stroke-width="1"/></svg>
<div class="t" style="left:617.5px;top:142.20px;font-size:6.6px;font-weight:normal;color:#fff;">Search Events</div>
<svg class="a" style="left:668.5px;top:144px" width="5" height="6" viewBox="0 0 5 6"><path d="M0.2 0.3 H4.8 L3 2.8 V5.7 L2 5 V2.8Z" fill="#fff"/></svg>
<div class="t" style="left:674.5px;top:142.20px;font-size:6.6px;font-weight:normal;color:#fff;">Filter</div>
<div class="a" style="left:148.8px;top:152.6px;width:546.0px;height:10.200000000000017px;background:#7c8eb9;"></div>
<div class="t" style="left:17.900000000000006px;width:300px;text-align:center;top:152.80px;font-size:6.5px;font-weight:normal;color:#eef1f8;">Date</div>
<div class="t" style="left:61.599999999999994px;width:300px;text-align:center;top:152.80px;font-size:6.6px;font-weight:normal;color:#eef1f8;text-decoration:underline;">8:45am</div>
<div class="t" style="left:112.10000000000002px;width:300px;text-align:center;top:152.80px;font-size:6.3px;font-weight:normal;color:#eef1f8;">Currency</div>
<div class="t" style="left:144.89999999999998px;width:300px;text-align:center;top:152.80px;font-size:6.4px;font-weight:normal;color:#eef1f8;">Impact</div>
<div class="t" style="left:376px;width:300px;text-align:center;top:152.80px;font-size:6.4px;font-weight:normal;color:#eef1f8;">Detail</div>
<div class="t" style="left:413.79999999999995px;width:300px;text-align:center;top:152.80px;font-size:6.5px;font-weight:normal;color:#eef1f8;">Actual</div>
<div class="t" style="left:457.6px;width:300px;text-align:center;top:152.80px;font-size:6.5px;font-weight:normal;color:#eef1f8;">Forecast</div>
<div class="t" style="left:501px;width:300px;text-align:center;top:152.80px;font-size:6.5px;font-weight:normal;color:#eef1f8;">Previous</div>
<div class="t" style="left:533.6px;width:300px;text-align:center;top:152.80px;font-size:6.5px;font-weight:normal;color:#eef1f8;">Graph</div>
<div class="a" style="left:186.6px;top:162.8px;width:0.8px;height:270.75px;background:#e1e4eb;"></div>
<div class="t" style="left:17.599999999999994px;width:300px;text-align:center;top:166.40px;font-size:6.6px;font-weight:normal;color:#333;">Fri</div>
<div class="t" style="left:17.599999999999994px;width:300px;text-align:center;top:174.00px;font-size:6.6px;font-weight:normal;color:#333;">Mar 24</div>
<div class="t" style="left:61.900000000000006px;width:300px;text-align:center;top:165.73px;font-size:6.6px;font-weight:normal;color:#8c8c8c;">3:00am</div>
<svg class="a" style="left:237.5px;top:166.925px" width="5" height="7" viewBox="0 0 5 7"><path d="M0.9 1.2 Q2.5 3.2 0.9 5.4" stroke="#9aa6c2" stroke-width="0.9" fill="none"/><path d="M2.4 0.4 Q5 3.2 2.4 6.2" stroke="#9aa6c2" stroke-width="0.9" fill="none"/></svg>
<div class="t" style="left:112.10000000000002px;width:300px;text-align:center;top:165.73px;font-size:6.6px;font-weight:normal;color:#333;">GBP</div>
<svg class="a" style="left:290.9px;top:167.625px" width="7.1" height="5.9" viewBox="0 0 7.1 5.9"><rect x="0" y="1" width="7.1" height="4.9" fill="#f09c40"/><rect x="0" y="4.6" width="7.1" height="1.3" fill="#d9832a"/><rect x="0.2" y="0.1" width="1.6" height="1.2" fill="#f09c40"/><rect x="2.75" y="0.4" width="1.6" height="1" fill="#f09c40"/><rect x="5.3" y="0" width="1.6" height="1.2" fill="#f09c40"/></svg>
<div class="t" style="left:320px;top:165.73px;font-size:6.35px;font-weight:normal;color:#333;">Retail Sales m/m</div>
<svg class="a" style="left:522px;top:165.425px" width="9.5" height="8.5" viewBox="0 0 9.5 8.5"><circle cx="6.2" cy="3.4" r="3.1" fill="#aec3ea"/><rect x="4.4" y="2.2" width="3.6" height="1.6" fill="#eef3fb"/><path d="M0.3 3 H2.6 L3.2 3.8 H6.6 V8.2 H0.3Z" fill="#f6d67a" stroke="#e2b25a" stroke-width="0.5"/><rect x="0.8" y="5.5" width="5.4" height="1.8" fill="#fdeaa6"/></svg>
<div class="t" style="left:413.79999999999995px;width:300px;text-align:center;top:165.73px;font-size:6.6px;font-weight:normal;color:#4d9a3c;">1.2%</div>
<div class="t" style="left:457.4px;width:300px;text-align:center;top:165.73px;font-size:6.6px;font-weight:normal;color:#333;">0.2%</div>
<div class="t" style="left:499.5px;width:300px;text-align:center;top:165.73px;font-size:6.6px;font-weight:normal;color:#4d9a3c;">0.9%</div>
<svg class="a" style="left:658.3px;top:168.125px" width="3" height="3.6" viewBox="0 0 3 3.6"><polygon points="3,0 3,3.6 0,1.8" fill="#f0a030"/></svg>
<svg class="a" style="left:680px;top:165.625px" width="8.5" height="9" viewBox="0 0 8.5 9"><rect x="0" y="2" width="2" height="5" fill="#e8685a"/><rect x="2.1" y="0" width="3.7" height="7" fill="#6a9ae8"/><rect x="5.8" y="3.9" width="2.2" height="3.1" fill="#6ab04a"/><rect x="0" y="6.2" width="8" height="0.8" fill="#2a3ab0"/><rect x="0" y="8.4" width="8" height="0.5" fill="#e2e5ee"/></svg>
<div class="a" style="left:186.6px;top:177.05px;width:508.19999999999993px;height:0.8px;background:#e6e8ee;"></div>
<div class="t" style="left:61.900000000000006px;width:300px;text-align:center;top:179.98px;font-size:6.6px;font-weight:normal;color:#8c8c8c;">4:15am</div>
<svg class="a" style="left:237.5px;top:181.175px" width="5" height="7" viewBox="0 0 5 7"><path d="M0.9 1.2 Q2.5 3.2 0.9 5.4" stroke="#9aa6c2" stroke-width="0.9" fill="none"/><path d="M2.4 0.4 Q5 3.2 2.4 6.2" stroke="#9aa6c2" stroke-width="0.9" fill="none"/></svg>
<div class="t" style="left:112.10000000000002px;width:300px;text-align:center;top:179.98px;font-size:6.6px;font-weight:normal;color:#333;">EUR</div>
<svg class="a" style="left:290.9px;top:181.875px" width="7.1" height="5.9" viewBox="0 0 7.1 5.9"><rect x="0" y="1" width="7.1" height="4.9" fill="#da2a1c"/><rect x="0" y="4.6" width="7.1" height="1.3" fill="#b51812"/><rect x="0.2" y="0.1" width="1.6" height="1.2" fill="#da2a1c"/><rect x="2.75" y="0.4" width="1.6" height="1" fill="#da2a1c"/><rect x="5.3" y="0" width="1.6" height="1.2" fill="#da2a1c"/></svg>
<div class="t" style="left:320px;top:179.98px;font-size:6.35px;font-weight:normal;color:#333;">French Flash Manufacturing PMI</div>
<svg class="a" style="left:522px;top:179.675px" width="9.5" height="8.5" viewBox="0 0 9.5 8.5"><circle cx="6.2" cy="3.4" r="3.1" fill="#aec3ea"/><rect x="4.4" y="2.2" width="3.6" height="1.6" fill="#eef3fb"/><path d="M0.3 3 H2.6 L3.2 3.8 H6.6 V8.2 H0.3Z" fill="#f6d67a" stroke="#e2b25a" stroke-width="0.5"/><rect x="0.8" y="5.5" width="5.4" height="1.8" fill="#fdeaa6"/></svg>
<div class="t" style="left:413.79999999999995px;width:300px;text-align:center;top:179.98px;font-size:6.6px;font-weight:normal;color:#c9483b;">47.7</div>
<div class="t" style="left:457.4px;width:300px;text-align:center;top:179.98px;font-size:6.6px;font-weight:normal;color:#333;">48.1</div>
<div class="t" style="left:499.5px;width:300px;text-align:center;top:179.98px;font-size:6.6px;font-weight:normal;color:#c9483b;">47.4</div>
<svg class="a" style="left:658.3px;top:182.375px" width="3" height="3.6" viewBox="0 0 3 3.6"><polygon points="3,0 3,3.6 0,1.8" fill="#f0a030"/></svg>
<svg class="a" style="left:680px;top:179.875px" width="8.5" height="9" viewBox="0 0 8.5 9"><rect x="0" y="2" width="2" height="5" fill="#e8685a"/><rect x="2.1" y="0" width="3.7" height="7" fill="#6a9ae8"/><rect x="5.8" y="3.9" width="2.2" height="3.1" fill="#6ab04a"/><rect x="0" y="6.2" width="8" height="0.8" fill="#2a3ab0"/><rect x="0" y="8.4" width="8" height="0.5" fill="#e2e5ee"/></svg>
<svg class="a" style="left:237.5px;top:195.425px" width="5" height="7" viewBox="0 0 5 7"><path d="M0.9 1.2 Q2.5 3.2 0.9 5.4" stroke="#9aa6c2" stroke-width="0.9" fill="none"/><path d="M2.4 0.4 Q5 3.2 2.4 6.2" stroke="#9aa6c2" stroke-width="0.9" fill="none"/></svg>
<div class="t" style="left:112.10000000000002px;width:300px;text-align:center;top:194.23px;font-size:6.6px;font-weight:normal;color:#333;">EUR</div>
<svg class="a" style="left:290.9px;top:196.125px" width="7.1" height="5.9" viewBox="0 0 7.1 5.9"><rect x="0" y="1" width="7.1" height="4.9" fill="#da2a1c"/><rect x="0" y="4.6" width="7.1" height="1.3" fill="#b51812"/><rect x="0.2" y="0.1" width="1.6" height="1.2" fill="#da2a1c"/><rect x="2.75" y="0.4" width="1.6" height="1" fill="#da2a1c"/><rect x="5.3" y="0" width="1.6" height="1.2" fill="#da2a1c"/></svg>
<div class="t" style="left:320px;top:194.23px;font-size:6.35px;font-weight:normal;color:#333;">French Flash Services PMI</div>
<svg class="a" style="left:522px;top:193.925px" width="9.5" height="8.5" viewBox="0 0 9.5 8.5"><circle cx="6.2" cy="3.4" r="3.1" fill="#aec3ea"/><rect x="4.4" y="2.2" width="3.6" height="1.6" fill="#eef3fb"/><path d="M0.3 3 H2.6 L3.2 3.8 H6.6 V8.2 H0.3Z" fill="#f6d67a" stroke="#e2b25a" stroke-width="0.5"/><rect x="0.8" y="5.5" width="5.4" height="1.8" fill="#fdeaa6"/></svg>
<div class="t" style="left:413.79999999999995px;width:300px;text-align:center;top:194.23px;font-size:6.6px;font-weight:normal;color:#4d9a3c;">55.5</div>
<div class="t" style="left:457.4px;width:300px;text-align:center;top:194.23px;font-size:6.6px;font-weight:normal;color:#333;">52.4</div>
<div class="t" style="left:499.5px;width:300px;text-align:center;top:194.23px;font-size:6.6px;font-weight:normal;color:#333;">53.1</div>
<svg class="a" style="left:658.3px;top:196.625px" width="3" height="3.6" viewBox="0 0 3 3.6"><polygon points="3,0 3,3.6 0,1.8" fill="#f0a030"/></svg>
<svg class="a" style="left:680px;top:194.125px" width="8.5" height="9" viewBox="0 0 8.5 9"><rect x="0" y="2" width="2" height="5" fill="#e8685a"/><rect x="2.1" y="0" width="3.7" height="7" fill="#6a9ae8"/><rect x="5.8" y="3.9" width="2.2" height="3.1" fill="#6ab04a"/><rect x="0" y="6.2" width="8" height="0.8" fill="#2a3ab0"/><rect x="0" y="8.4" width="8" height="0.5" fill="#e2e5ee"/></svg>
<div class="a" style="left:186.6px;top:205.55px;width:508.19999999999993px;height:0.8px;background:#e6e8ee;"></div>
<div class="t" style="left:61.900000000000006px;width:300px;text-align:center;top:208.48px;font-size:6.6px;font-weight:normal;color:#8c8c8c;">4:30am</div>
<svg class="a" style="left:237.5px;top:209.675px" width="5" height="7" viewBox="0 0 5 7"><path d="M0.9 1.2 Q2.5 3.2 0.9 5.4" stroke="#9aa6c2" stroke-width="0.9" fill="none"/><path d="M2.4 0.4 Q5 3.2 2.4 6.2" stroke="#9aa6c2" stroke-width="0.9" fill="none"/></svg>
<div class="t" style="left:112.10000000000002px;width:300px;text-align:center;top:208.48px;font-size:6.6px;font-weight:normal;color:#333;">EUR</div>
<svg class="a" style="left:290.9px;top:210.375px" width="7.1" height="5.9" viewBox="0 0 7.1 5.9"><rect x="0" y="1" width="7.1" height="4.9" fill="#da2a1c"/><rect x="0" y="4.6" width="7.1" height="1.3" fill="#b51812"/><rect x="0.2" y="0.1" width="1.6" height="1.2" fill="#da2a1c"/><rect x="2.75" y="0.4" width="1.6" height="1" fill="#da2a1c"/><rect x="5.3" y="0" width="1.6" height="1.2" fill="#da2a1c"/></svg>
<div class="t" style="left:320px;top:208.48px;font-size:6.35px;font-weight:normal;color:#333;">German Flash Manufacturing PMI</div>
<svg class="a" style="left:522px;top:208.175px" width="9.5" height="8.5" viewBox="0 0 9.5 8.5"><circle cx="6.2" cy="3.4" r="3.1" fill="#aec3ea"/><rect x="4.4" y="2.2" width="3.6" height="1.6" fill="#eef3fb"/><path d="M0.3 3 H2.6 L3.2 3.8 H6.6 V8.2 H0.3Z" fill="#f6d67a" stroke="#e2b25a" stroke-width="0.5"/><rect x="0.8" y="5.5" width="5.4" height="1.8" fill="#fdeaa6"/></svg>
<div class="t" style="left:413.79999999999995px;width:300px;text-align:center;top:208.48px;font-size:6.6px;font-weight:normal;color:#c9483b;">44.4</div>
<div class="t" style="left:457.4px;width:300px;text-align:center;top:208.48px;font-size:6.6px;font-weight:normal;color:#333;">47.1</div>
<div class="t" style="left:499.5px;width:300px;text-align:center;top:208.48px;font-size:6.6px;font-weight:normal;color:#333;">46.3</div>
<svg class="a" style="left:658.3px;top:210.875px" width="3" height="3.6" viewBox="0 0 3 3.6"><polygon points="3,0 3,3.6 0,1.8" fill="#f0a030"/></svg>
<svg class="a" style="left:680px;top:208.375px" width="8.5" height="9" viewBox="0 0 8.5 9"><rect x="0" y="2" width="2" height="5" fill="#e8685a"/><rect x="2.1" y="0" width="3.7" height="7" fill="#6a9ae8"/><rect x="5.8" y="3.9" width="2.2" height="3.1" fill="#6ab04a"/><rect x="0" y="6.2" width="8" height="0.8" fill="#2a3ab0"/><rect x="0" y="8.4" width="8" height="0.5" fill="#e2e5ee"/></svg>
<svg class="a" style="left:237.5px;top:223.925px" width="5" height="7" viewBox="0 0 5 7"><path d="M0.9 1.2 Q2.5 3.2 0.9 5.4" stroke="#9aa6c2" stroke-width="0.9" fill="none"/><path d="M2.4 0.4 Q5 3.2 2.4 6.2" stroke="#9aa6c2" stroke-width="0.9" fill="none"/></svg>
<div class="t" style="left:112.10000000000002px;width:300px;text-align:center;top:222.73px;font-size:6.6px;font-weight:normal;color:#333;">EUR</div>
<svg class="a" style="left:290.9px;top:224.625px" width="7.1" height="5.9" viewBox="0 0 7.1 5.9"><rect x="0" y="1" width="7.1" height="4.9" fill="#da2a1c"/><rect x="0" y="4.6" width="7.1" height="1.3" fill="#b51812"/><rect x="0.2" y="0.1" width="1.6" height="1.2" fill="#da2a1c"/><rect x="2.75" y="0.4" width="1.6" height="1" fill="#da2a1c"/><rect x="5.3" y="0" width="1.6" height="1.2" fill="#da2a1c"/></svg>
<div class="t" style="left:320px;top:222.73px;font-size:6.35px;font-weight:normal;color:#333;">German Flash Services PMI</div>
<svg class="a" style="left:522px;top:222.425px" width="9.5" height="8.5" viewBox="0 0 9.5 8.5"><circle cx="6.2" cy="3.4" r="3.1" fill="#aec3ea"/><rect x="4.4" y="2.2" width="3.6" height="1.6" fill="#eef3fb"/><path d="M0.3 3 H2.6 L3.2 3.8 H6.6 V8.2 H0.3Z" fill="#f6d67a" stroke="#e2b25a" stroke-width="0.5"/><rect x="0.8" y="5.5" width="5.4" height="1.8" fill="#fdeaa6"/></svg>
<div class="t" style="left:413.79999999999995px;width:300px;text-align:center;top:222.73px;font-size:6.6px;font-weight:normal;color:#4d9a3c;">53.9</div>
<div class="t" style="left:457.4px;width:300px;text-align:center;top:222.73px;font-size:6.6px;font-weight:normal;color:#333;">51.0</div>
<div class="t" style="left:499.5px;width:300px;text-align:center;top:222.73px;font-size:6.6px;font-weight:normal;color:#c9483b;">50.9</div>
<svg class="a" style="left:658.3px;top:225.125px" width="3" height="3.6" viewBox="0 0 3 3.6"><polygon points="3,0 3,3.6 0,1.8" fill="#f0a030"/></svg>
<svg class="a" style="left:680px;top:222.625px" width="8.5" height="9" viewBox="0 0 8.5 9"><rect x="0" y="2" width="2" height="5" fill="#e8685a"/><rect x="2.1" y="0" width="3.7" height="7" fill="#6a9ae8"/><rect x="5.8" y="3.9" width="2.2" height="3.1" fill="#6ab04a"/><rect x="0" y="6.2" width="8" height="0.8" fill="#2a3ab0"/><rect x="0" y="8.4" width="8" height="0.5" fill="#e2e5ee"/></svg>
<div class="a" style="left:186.6px;top:234.05px;width:508.19999999999993px;height:0.8px;background:#e6e8ee;"></div>
<div class="t" style="left:61.900000000000006px;width:300px;text-align:center;top:236.98px;font-size:6.6px;font-weight:normal;color:#8c8c8c;">5:00am</div>
<svg class="a" style="left:237.5px;top:238.175px" width="5" height="7" viewBox="0 0 5 7"><path d="M0.9 1.2 Q2.5 3.2 0.9 5.4" stroke="#9aa6c2" stroke-width="0.9" fill="none"/><path d="M2.4 0.4 Q5 3.2 2.4 6.2" stroke="#9aa6c2" stroke-width="0.9" fill="none"/></svg>
<div class="t" style="left:112.10000000000002px;width:300px;text-align:center;top:236.98px;font-size:6.6px;font-weight:normal;color:#333;">EUR</div>
<svg class="a" style="left:290.9px;top:238.875px" width="7.1" height="5.9" viewBox="0 0 7.1 5.9"><rect x="0" y="1" width="7.1" height="4.9" fill="#f09c40"/><rect x="0" y="4.6" width="7.1" height="1.3" fill="#d9832a"/><rect x="0.2" y="0.1" width="1.6" height="1.2" fill="#f09c40"/><rect x="2.75" y="0.4" width="1.6" height="1" fill="#f09c40"/><rect x="5.3" y="0" width="1.6" height="1.2" fill="#f09c40"/></svg>
<div class="t" style="left:320px;top:236.98px;font-size:6.35px;font-weight:normal;color:#333;">Flash Manufacturing PMI</div>
<svg class="a" style="left:522px;top:236.675px" width="9.5" height="8.5" viewBox="0 0 9.5 8.5"><circle cx="6.2" cy="3.4" r="3.1" fill="#aec3ea"/><rect x="4.4" y="2.2" width="3.6" height="1.6" fill="#eef3fb"/><path d="M0.3 3 H2.6 L3.2 3.8 H6.6 V8.2 H0.3Z" fill="#f6d67a" stroke="#e2b25a" stroke-width="0.5"/><rect x="0.8" y="5.5" width="5.4" height="1.8" fill="#fdeaa6"/></svg>
<div class="t" style="left:413.79999999999995px;width:300px;text-align:center;top:236.98px;font-size:6.6px;font-weight:normal;color:#c9483b;">47.1</div>
<div class="t" style="left:457.4px;width:300px;text-align:center;top:236.98px;font-size:6.6px;font-weight:normal;color:#333;">48.9</div>
<div class="t" style="left:499.5px;width:300px;text-align:center;top:236.98px;font-size:6.6px;font-weight:normal;color:#333;">48.5</div>
<svg class="a" style="left:658.3px;top:239.375px" width="3" height="3.6" viewBox="0 0 3 3.6"><polygon points="3,0 3,3.6 0,1.8" fill="#f0a030"/></svg>
<svg class="a" style="left:680px;top:236.875px" width="8.5" height="9" viewBox="0 0 8.5 9"><rect x="0" y="2" width="2" height="5" fill="#e8685a"/><rect x="2.1" y="0" width="3.7" height="7" fill="#6a9ae8"/><rect x="5.8" y="3.9" width="2.2" height="3.1" fill="#6ab04a"/><rect x="0" y="6.2" width="8" height="0.8" fill="#2a3ab0"/><rect x="0" y="8.4" width="8" height="0.5" fill="#e2e5ee"/></svg>
<svg class="a" style="left:237.5px;top:252.425px" width="5" height="7" viewBox="0 0 5 7"><path d="M0.9 1.2 Q2.5 3.2 0.9 5.4" stroke="#9aa6c2" stroke-width="0.9" fill="none"/><path d="M2.4 0.4 Q5 3.2 2.4 6.2" stroke="#9aa6c2" stroke-width="0.9" fill="none"/></svg>
<div class="t" style="left:112.10000000000002px;width:300px;text-align:center;top:251.23px;font-size:6.6px;font-weight:normal;color:#333;">EUR</div>
<svg class="a" style="left:290.9px;top:253.125px" width="7.1" height="5.9" viewBox="0 0 7.1 5.9"><rect x="0" y="1" width="7.1" height="4.9" fill="#f09c40"/><rect x="0" y="4.6" width="7.1" height="1.3" fill="#d9832a"/><rect x="0.2" y="0.1" width="1.6" height="1.2" fill="#f09c40"/><rect x="2.75" y="0.4" width="1.6" height="1" fill="#f09c40"/><rect x="5.3" y="0" width="1.6" height="1.2" fill="#f09c40"/></svg>
<div class="t" style="left:320px;top:251.23px;font-size:6.35px;font-weight:normal;color:#333;">Flash Services PMI</div>
<svg class="a" style="left:522px;top:250.925px" width="9.5" height="8.5" viewBox="0 0 9.5 8.5"><circle cx="6.2" cy="3.4" r="3.1" fill="#aec3ea"/><rect x="4.4" y="2.2" width="3.6" height="1.6" fill="#eef3fb"/><path d="M0.3 3 H2.6 L3.2 3.8 H6.6 V8.2 H0.3Z" fill="#f6d67a" stroke="#e2b25a" stroke-width="0.5"/><rect x="0.8" y="5.5" width="5.4" height="1.8" fill="#fdeaa6"/></svg>
<div class="t" style="left:413.79999999999995px;width:300px;text-align:center;top:251.23px;font-size:6.6px;font-weight:normal;color:#4d9a3c;">55.6</div>
<div class="t" style="left:457.4px;width:300px;text-align:center;top:251.23px;font-size:6.6px;font-weight:normal;color:#333;">52.6</div>
<div class="t" style="left:499.5px;width:300px;text-align:center;top:251.23px;font-size:6.6px;font-weight:normal;color:#333;">52.7</div>
<svg class="a" style="left:658.3px;top:253.625px" width="3" height="3.6" viewBox="0 0 3 3.6"><polygon points="3,0 3,3.6 0,1.8" fill="#f0a030"/></svg>
<svg class="a" style="left:680px;top:251.125px" width="8.5" height="9" viewBox="0 0 8.5 9"><rect x="0" y="2" width="2" height="5" fill="#e8685a"/><rect x="2.1" y="0" width="3.7" height="7" fill="#6a9ae8"/><rect x="5.8" y="3.9" width="2.2" height="3.1" fill="#6ab04a"/><rect x="0" y="6.2" width="8" height="0.8" fill="#2a3ab0"/><rect x="0" y="8.4" width="8" height="0.5" fill="#e2e5ee"/></svg>
<div class="a" style="left:186.6px;top:262.55px;width:508.19999999999993px;height:0.8px;background:#e6e8ee;"></div>
<div class="t" style="left:61.900000000000006px;width:300px;text-align:center;top:265.48px;font-size:6.6px;font-weight:normal;color:#8c8c8c;">5:15am</div>
<svg class="a" style="left:237.5px;top:266.675px" width="5" height="7" viewBox="0 0 5 7"><path d="M0.9 1.2 Q2.5 3.2 0.9 5.4" stroke="#9aa6c2" stroke-width="0.9" fill="none"/><path d="M2.4 0.4 Q5 3.2 2.4 6.2" stroke="#9aa6c2" stroke-width="0.9" fill="none"/></svg>
<div class="t" style="left:112.10000000000002px;width:300px;text-align:center;top:265.48px;font-size:6.6px;font-weight:normal;color:#333;">EUR</div>
<svg class="a" style="left:290.9px;top:267.375px" width="7.1" height="5.9" viewBox="0 0 7.1 5.9"><rect x="0" y="1" width="7.1" height="4.9" fill="#f4dc48"/><rect x="0" y="4.6" width="7.1" height="1.3" fill="#dcc035"/><rect x="0.2" y="0.1" width="1.6" height="1.2" fill="#f4dc48"/><rect x="2.75" y="0.4" width="1.6" height="1" fill="#f4dc48"/><rect x="5.3" y="0" width="1.6" height="1.2" fill="#f4dc48"/></svg>
<div class="t" style="left:320px;top:265.48px;font-size:6.35px;font-weight:normal;color:#333;">German Buba President Nagel Speaks</div>
<svg class="a" style="left:522px;top:265.175px" width="9.5" height="8.5" viewBox="0 0 9.5 8.5"><circle cx="6.2" cy="3.4" r="3.1" fill="#aec3ea"/><rect x="4.4" y="2.2" width="3.6" height="1.6" fill="#eef3fb"/><path d="M0.3 3 H2.6 L3.2 3.8 H6.6 V8.2 H0.3Z" fill="#f6d67a" stroke="#e2b25a" stroke-width="0.5"/><rect x="0.8" y="5.5" width="5.4" height="1.8" fill="#fdeaa6"/></svg>
<div class="a" style="left:186.6px;top:276.8px;width:508.19999999999993px;height:0.8px;background:#e6e8ee;"></div>
<div class="t" style="left:61.900000000000006px;width:300px;text-align:center;top:279.73px;font-size:6.6px;font-weight:normal;color:#8c8c8c;">5:30am</div>
<svg class="a" style="left:237.5px;top:280.925px" width="5" height="7" viewBox="0 0 5 7"><path d="M0.9 1.2 Q2.5 3.2 0.9 5.4" stroke="#9aa6c2" stroke-width="0.9" fill="none"/><path d="M2.4 0.4 Q5 3.2 2.4 6.2" stroke="#9aa6c2" stroke-width="0.9" fill="none"/></svg>
<div class="t" style="left:112.10000000000002px;width:300px;text-align:center;top:279.73px;font-size:6.6px;font-weight:normal;color:#333;">GBP</div>
<svg class="a" style="left:290.9px;top:281.625px" width="7.1" height="5.9" viewBox="0 0 7.1 5.9"><rect x="0" y="1" width="7.1" height="4.9" fill="#da2a1c"/><rect x="0" y="4.6" width="7.1" height="1.3" fill="#b51812"/><rect x="0.2" y="0.1" width="1.6" height="1.2" fill="#da2a1c"/><rect x="2.75" y="0.4" width="1.6" height="1" fill="#da2a1c"/><rect x="5.3" y="0" width="1.6" height="1.2" fill="#da2a1c"/></svg>
<div class="t" style="left:320px;top:279.73px;font-size:6.35px;font-weight:normal;color:#333;">Flash Manufacturing PMI</div>
<svg class="a" style="left:522px;top:279.425px" width="9.5" height="8.5" viewBox="0 0 9.5 8.5"><circle cx="6.2" cy="3.4" r="3.1" fill="#aec3ea"/><rect x="4.4" y="2.2" width="3.6" height="1.6" fill="#eef3fb"/><path d="M0.3 3 H2.6 L3.2 3.8 H6.6 V8.2 H0.3Z" fill="#f6d67a" stroke="#e2b25a" stroke-width="0.5"/><rect x="0.8" y="5.5" width="5.4" height="1.8" fill="#fdeaa6"/></svg>
<div class="t" style="left:413.79999999999995px;width:300px;text-align:center;top:279.73px;font-size:6.6px;font-weight:normal;color:#c9483b;">48.0</div>
<div class="t" style="left:457.4px;width:300px;text-align:center;top:279.73px;font-size:6.6px;font-weight:normal;color:#333;">49.8</div>
<div class="t" style="left:499.5px;width:300px;text-align:center;top:279.73px;font-size:6.6px;font-weight:normal;color:#333;">49.3</div>
<svg class="a" style="left:658.3px;top:282.125px" width="3" height="3.6" viewBox="0 0 3 3.6"><polygon points="3,0 3,3.6 0,1.8" fill="#f0a030"/></svg>
<svg class="a" style="left:680px;top:279.625px" width="8.5" height="9" viewBox="0 0 8.5 9"><rect x="0" y="2" width="2" height="5" fill="#e8685a"/><rect x="2.1" y="0" width="3.7" height="7" fill="#6a9ae8"/><rect x="5.8" y="3.9" width="2.2" height="3.1" fill="#6ab04a"/><rect x="0" y="6.2" width="8" height="0.8" fill="#2a3ab0"/><rect x="0" y="8.4" width="8" height="0.5" fill="#e2e5ee"/></svg>
<svg class="a" style="left:237.5px;top:295.175px" width="5" height="7" viewBox="0 0 5 7"><path d="M0.9 1.2 Q2.5 3.2 0.9 5.4" stroke="#9aa6c2" stroke-width="0.9" fill="none"/><path d="M2.4 0.4 Q5 3.2 2.4 6.2" stroke="#9aa6c2" stroke-width="0.9" fill="none"/></svg>
<div class="t" style="left:112.10000000000002px;width:300px;text-align:center;top:293.98px;font-size:6.6px;font-weight:normal;color:#333;">GBP</div>
<svg class="a" style="left:290.9px;top:295.875px" width="7.1" height="5.9" viewBox="0 0 7.1 5.9"><rect x="0" y="1" width="7.1" height="4.9" fill="#da2a1c"/><rect x="0" y="4.6" width="7.1" height="1.3" fill="#b51812"/><rect x="0.2" y="0.1" width="1.6" height="1.2" fill="#da2a1c"/><rect x="2.75" y="0.4" width="1.6" height="1" fill="#da2a1c"/><rect x="5.3" y="0" width="1.6" height="1.2" fill="#da2a1c"/></svg>
<div class="t" style="left:320px;top:293.98px;font-size:6.35px;font-weight:normal;color:#333;">Flash Services PMI</div>
<svg class="a" style="left:522px;top:293.675px" width="9.5" height="8.5" viewBox="0 0 9.5 8.5"><circle cx="6.2" cy="3.4" r="3.1" fill="#aec3ea"/><rect x="4.4" y="2.2" width="3.6" height="1.6" fill="#eef3fb"/><path d="M0.3 3 H2.6 L3.2 3.8 H6.6 V8.2 H0.3Z" fill="#f6d67a" stroke="#e2b25a" stroke-width="0.5"/><rect x="0.8" y="5.5" width="5.4" height="1.8" fill="#fdeaa6"/></svg>
<div class="t" style="left:413.79999999999995px;width:300px;text-align:center;top:293.98px;font-size:6.6px;font-weight:normal;color:#333;">52.8</div>
<div class="t" style="left:457.4px;width:300px;text-align:center;top:293.98px;font-size:6.6px;font-weight:normal;color:#333;">53.1</div>
<div class="t" style="left:499.5px;width:300px;text-align:center;top:293.98px;font-size:6.6px;font-weight:normal;color:#333;">53.5</div>
<svg class="a" style="left:658.3px;top:296.375px" width="3" height="3.6" viewBox="0 0 3 3.6"><polygon points="3,0 3,3.6 0,1.8" fill="#f0a030"/></svg>
<svg class="a" style="left:680px;top:293.875px" width="8.5" height="9" viewBox="0 0 8.5 9"><rect x="0" y="2" width="2" height="5" fill="#e8685a"/><rect x="2.1" y="0" width="3.7" height="7" fill="#6a9ae8"/><rect x="5.8" y="3.9" width="2.2" height="3.1" fill="#6ab04a"/><rect x="0" y="6.2" width="8" height="0.8" fill="#2a3ab0"/><rect x="0" y="8.4" width="8" height="0.5" fill="#e2e5ee"/></svg>
<div class="a" style="left:186.6px;top:305.3px;width:508.19999999999993px;height:0.8px;background:#e6e8ee;"></div>
<div class="t" style="left:61.900000000000006px;width:300px;text-align:center;top:308.23px;font-size:6.6px;font-weight:normal;color:#333;">All Day</div>
<div class="t" style="left:112.10000000000002px;width:300px;text-align:center;top:308.23px;font-size:6.6px;font-weight:normal;color:#333;">EUR</div>
<svg class="a" style="left:290.9px;top:310.125px" width="7.1" height="5.9" viewBox="0 0 7.1 5.9"><rect x="0" y="1" width="7.1" height="4.9" fill="#da2a1c"/><rect x="0" y="4.6" width="7.1" height="1.3" fill="#b51812"/><rect x="0.2" y="0.1" width="1.6" height="1.2" fill="#da2a1c"/><rect x="2.75" y="0.4" width="1.6" height="1" fill="#da2a1c"/><rect x="5.3" y="0" width="1.6" height="1.2" fill="#da2a1c"/></svg>
<div class="t" style="left:320px;top:308.23px;font-size:6.35px;font-weight:normal;color:#333;">Euro Summit</div>
<svg class="a" style="left:522px;top:309.225px" width="8" height="7" viewBox="0 0 8 7"><path d="M0.3 0.3 H3 L3.8 1.3 H7.5 V6.6 H0.3Z" fill="#f7da80" stroke="#e4b85e" stroke-width="0.5"/><rect x="0.8" y="3.5" width="6.3" height="2" fill="#fdecb0"/></svg>
<div class="a" style="left:186.6px;top:319.55px;width:508.19999999999993px;height:0.8px;background:#e6e8ee;"></div>
<div class="t" style="left:61.900000000000006px;width:300px;text-align:center;top:322.48px;font-size:6.6px;font-weight:normal;color:#8c8c8c;">8:30am</div>
<svg class="a" style="left:237.5px;top:323.675px" width="5" height="7" viewBox="0 0 5 7"><path d="M0.9 1.2 Q2.5 3.2 0.9 5.4" stroke="#9aa6c2" stroke-width="0.9" fill="none"/><path d="M2.4 0.4 Q5 3.2 2.4 6.2" stroke="#9aa6c2" stroke-width="0.9" fill="none"/></svg>
<div class="t" style="left:112.10000000000002px;width:300px;text-align:center;top:322.48px;font-size:6.6px;font-weight:normal;color:#333;">CAD</div>
<svg class="a" style="left:290.9px;top:324.375px" width="7.1" height="5.9" viewBox="0 0 7.1 5.9"><rect x="0" y="1" width="7.1" height="4.9" fill="#f09c40"/><rect x="0" y="4.6" width="7.1" height="1.3" fill="#d9832a"/><rect x="0.2" y="0.1" width="1.6" height="1.2" fill="#f09c40"/><rect x="2.75" y="0.4" width="1.6" height="1" fill="#f09c40"/><rect x="5.3" y="0" width="1.6" height="1.2" fill="#f09c40"/></svg>
<div class="t" style="left:320px;top:322.48px;font-size:6.35px;font-weight:normal;color:#333;">Core Retail Sales m/m</div>
<svg class="a" style="left:522px;top:322.175px" width="9.5" height="8.5" viewBox="0 0 9.5 8.5"><circle cx="6.2" cy="3.4" r="3.1" fill="#aec3ea"/><rect x="4.4" y="2.2" width="3.6" height="1.6" fill="#eef3fb"/><path d="M0.3 3 H2.6 L3.2 3.8 H6.6 V8.2 H0.3Z" fill="#f6d67a" stroke="#e2b25a" stroke-width="0.5"/><rect x="0.8" y="5.5" width="5.4" height="1.8" fill="#fdeaa6"/></svg>
<div class="t" style="left:413.79999999999995px;width:300px;text-align:center;top:322.48px;font-size:6.6px;font-weight:normal;color:#4d9a3c;">0.9%</div>
<div class="t" style="left:457.4px;width:300px;text-align:center;top:322.48px;font-size:6.6px;font-weight:normal;color:#333;">0.6%</div>
<div class="t" style="left:499.5px;width:300px;text-align:center;top:322.48px;font-size:6.6px;font-weight:normal;color:#333;">-0.6%</div>
<svg class="a" style="left:680px;top:322.375px" width="8.5" height="9" viewBox="0 0 8.5 9"><rect x="0" y="2" width="2" height="5" fill="#e8685a"/><rect x="2.1" y="0" width="3.7" height="7" fill="#6a9ae8"/><rect x="5.8" y="3.9" width="2.2" height="3.1" fill="#6ab04a"/><rect x="0" y="6.2" width="8" height="0.8" fill="#2a3ab0"/><rect x="0" y="8.4" width="8" height="0.5" fill="#e2e5ee"/></svg>
<svg class="a" style="left:237.5px;top:337.925px" width="5" height="7" viewBox="0 0 5 7"><path d="M0.9 1.2 Q2.5 3.2 0.9 5.4" stroke="#9aa6c2" stroke-width="0.9" fill="none"/><path d="M2.4 0.4 Q5 3.2 2.4 6.2" stroke="#9aa6c2" stroke-width="0.9" fill="none"/></svg>
<div class="t" style="left:112.10000000000002px;width:300px;text-align:center;top:336.73px;font-size:6.6px;font-weight:normal;color:#333;">CAD</div>
<svg class="a" style="left:290.9px;top:338.625px" width="7.1" height="5.9" viewBox="0 0 7.1 5.9"><rect x="0" y="1" width="7.1" height="4.9" fill="#f09c40"/><rect x="0" y="4.6" width="7.1" height="1.3" fill="#d9832a"/><rect x="0.2" y="0.1" width="1.6" height="1.2" fill="#f09c40"/><rect x="2.75" y="0.4" width="1.6" height="1" fill="#f09c40"/><rect x="5.3" y="0" width="1.6" height="1.2" fill="#f09c40"/></svg>
<div class="t" style="left:320px;top:336.73px;font-size:6.35px;font-weight:normal;color:#333;">Retail Sales m/m</div>
<svg class="a" style="left:522px;top:336.425px" width="9.5" height="8.5" viewBox="0 0 9.5 8.5"><circle cx="6.2" cy="3.4" r="3.1" fill="#aec3ea"/><rect x="4.4" y="2.2" width="3.6" height="1.6" fill="#eef3fb"/><path d="M0.3 3 H2.6 L3.2 3.8 H6.6 V8.2 H0.3Z" fill="#f6d67a" stroke="#e2b25a" stroke-width="0.5"/><rect x="0.8" y="5.5" width="5.4" height="1.8" fill="#fdeaa6"/></svg>
<div class="t" style="left:413.79999999999995px;width:300px;text-align:center;top:336.73px;font-size:6.6px;font-weight:normal;color:#4d9a3c;">1.4%</div>
<div class="t" style="left:457.4px;width:300px;text-align:center;top:336.73px;font-size:6.6px;font-weight:normal;color:#333;">0.7%</div>
<div class="t" style="left:499.5px;width:300px;text-align:center;top:336.73px;font-size:6.6px;font-weight:normal;color:#333;">0.5%</div>
<svg class="a" style="left:680px;top:336.625px" width="8.5" height="9" viewBox="0 0 8.5 9"><rect x="0" y="2" width="2" height="5" fill="#e8685a"/><rect x="2.1" y="0" width="3.7" height="7" fill="#6a9ae8"/><rect x="5.8" y="3.9" width="2.2" height="3.1" fill="#6ab04a"/><rect x="0" y="6.2" width="8" height="0.8" fill="#2a3ab0"/><rect x="0" y="8.4" width="8" height="0.5" fill="#e2e5ee"/></svg>
<svg class="a" style="left:237.5px;top:352.175px" width="5" height="7" viewBox="0 0 5 7"><path d="M0.9 1.2 Q2.5 3.2 0.9 5.4" stroke="#9aa6c2" stroke-width="0.9" fill="none"/><path d="M2.4 0.4 Q5 3.2 2.4 6.2" stroke="#9aa6c2" stroke-width="0.9" fill="none"/></svg>
<div class="t" style="left:112.10000000000002px;width:300px;text-align:center;top:350.98px;font-size:6.6px;font-weight:normal;color:#333;">USD</div>
<svg class="a" style="left:290.9px;top:352.875px" width="7.1" height="5.9" viewBox="0 0 7.1 5.9"><rect x="0" y="1" width="7.1" height="4.9" fill="#f09c40"/><rect x="0" y="4.6" width="7.1" height="1.3" fill="#d9832a"/><rect x="0.2" y="0.1" width="1.6" height="1.2" fill="#f09c40"/><rect x="2.75" y="0.4" width="1.6" height="1" fill="#f09c40"/><rect x="5.3" y="0" width="1.6" height="1.2" fill="#f09c40"/></svg>
<div class="t" style="left:320px;top:350.98px;font-size:6.35px;font-weight:normal;color:#333;">Core Durable Goods Orders m/m</div>
<svg class="a" style="left:522px;top:350.675px" width="9.5" height="8.5" viewBox="0 0 9.5 8.5"><circle cx="6.2" cy="3.4" r="3.1" fill="#aec3ea"/><rect x="4.4" y="2.2" width="3.6" height="1.6" fill="#eef3fb"/><path d="M0.3 3 H2.6 L3.2 3.8 H6.6 V8.2 H0.3Z" fill="#f6d67a" stroke="#e2b25a" stroke-width="0.5"/><rect x="0.8" y="5.5" width="5.4" height="1.8" fill="#fdeaa6"/></svg>
<div class="t" style="left:413.79999999999995px;width:300px;text-align:center;top:350.98px;font-size:6.6px;font-weight:normal;color:#c9483b;">0.0%</div>
<div class="t" style="left:457.4px;width:300px;text-align:center;top:350.98px;font-size:6.6px;font-weight:normal;color:#333;">0.2%</div>
<div class="t" style="left:499.5px;width:300px;text-align:center;top:350.98px;font-size:6.6px;font-weight:normal;color:#333;">0.8%</div>
<svg class="a" style="left:658.3px;top:353.375px" width="3" height="3.6" viewBox="0 0 3 3.6"><polygon points="3,0 3,3.6 0,1.8" fill="#f0a030"/></svg>
<svg class="a" style="left:680px;top:350.875px" width="8.5" height="9" viewBox="0 0 8.5 9"><rect x="0" y="2" width="2" height="5" fill="#e8685a"/><rect x="2.1" y="0" width="3.7" height="7" fill="#6a9ae8"/><rect x="5.8" y="3.9" width="2.2" height="3.1" fill="#6ab04a"/><rect x="0" y="6.2" width="8" height="0.8" fill="#2a3ab0"/><rect x="0" y="8.4" width="8" height="0.5" fill="#e2e5ee"/></svg>
<svg class="a" style="left:237.5px;top:366.425px" width="5" height="7" viewBox="0 0 5 7"><path d="M0.9 1.2 Q2.5 3.2 0.9 5.4" stroke="#9aa6c2" stroke-width="0.9" fill="none"/><path d="M2.4 0.4 Q5 3.2 2.4 6.2" stroke="#9aa6c2" stroke-width="0.9" fill="none"/></svg>
<div class="t" style="left:112.10000000000002px;width:300px;text-align:center;top:365.23px;font-size:6.6px;font-weight:normal;color:#333;">USD</div>
<svg class="a" style="left:290.9px;top:367.125px" width="7.1" height="5.9" viewBox="0 0 7.1 5.9"><rect x="0" y="1" width="7.1" height="4.9" fill="#f09c40"/><rect x="0" y="4.6" width="7.1" height="1.3" fill="#d9832a"/><rect x="0.2" y="0.1" width="1.6" height="1.2" fill="#f09c40"/><rect x="2.75" y="0.4" width="1.6" height="1" fill="#f09c40"/><rect x="5.3" y="0" width="1.6" height="1.2" fill="#f09c40"/></svg>
<div class="t" style="left:320px;top:365.23px;font-size:6.35px;font-weight:normal;color:#333;">Durable Goods Orders m/m</div>
<svg class="a" style="left:522px;top:364.925px" width="9.5" height="8.5" viewBox="0 0 9.5 8.5"><circle cx="6.2" cy="3.4" r="3.1" fill="#aec3ea"/><rect x="4.4" y="2.2" width="3.6" height="1.6" fill="#eef3fb"/><path d="M0.3 3 H2.6 L3.2 3.8 H6.6 V8.2 H0.3Z" fill="#f6d67a" stroke="#e2b25a" stroke-width="0.5"/><rect x="0.8" y="5.5" width="5.4" height="1.8" fill="#fdeaa6"/></svg>
<div class="t" style="left:413.79999999999995px;width:300px;text-align:center;top:365.23px;font-size:6.6px;font-weight:normal;color:#c9483b;">-1.0%</div>
<div class="t" style="left:457.4px;width:300px;text-align:center;top:365.23px;font-size:6.6px;font-weight:normal;color:#333;">0.4%</div>
<div class="t" style="left:499.5px;width:300px;text-align:center;top:365.23px;font-size:6.6px;font-weight:normal;color:#c9483b;">-5.0%</div>
<svg class="a" style="left:658.3px;top:367.625px" width="3" height="3.6" viewBox="0 0 3 3.6"><polygon points="3,0 3,3.6 0,1.8" fill="#f0a030"/></svg>
<svg class="a" style="left:680px;top:365.125px" width="8.5" height="9" viewBox="0 0 8.5 9"><rect x="0" y="2" width="2" height="5" fill="#e8685a"/><rect x="2.1" y="0" width="3.7" height="7" fill="#6a9ae8"/><rect x="5.8" y="3.9" width="2.2" height="3.1" fill="#6ab04a"/><rect x="0" y="6.2" width="8" height="0.8" fill="#2a3ab0"/><rect x="0" y="8.4" width="8" height="0.5" fill="#e2e5ee"/></svg>
<div class="a" style="left:186.6px;top:376.55px;width:508.19999999999993px;height:0.8px;background:#e6e8ee;"></div>
<svg class="a" style="left:198.6px;top:381.675px" width="3.4" height="4" viewBox="0 0 3.4 4"><polygon points="0,0 3.4,2 0,4" fill="#5cb531"/></svg>
<div class="t" style="left:64.0px;width:300px;text-align:center;top:379.48px;font-size:6.6px;font-weight:normal;color:#333;">9:45am</div>
<svg class="a" style="left:237.5px;top:380.675px" width="5" height="7" viewBox="0 0 5 7"><path d="M0.9 1.2 Q2.5 3.2 0.9 5.4" stroke="#9aa6c2" stroke-width="0.9" fill="none"/><path d="M2.4 0.4 Q5 3.2 2.4 6.2" stroke="#9aa6c2" stroke-width="0.9" fill="none"/></svg>
<div class="t" style="left:112.10000000000002px;width:300px;text-align:center;top:379.48px;font-size:6.6px;font-weight:normal;color:#333;">USD</div>
<svg class="a" style="left:290.9px;top:381.375px" width="7.1" height="5.9" viewBox="0 0 7.1 5.9"><rect x="0" y="1" width="7.1" height="4.9" fill="#da2a1c"/><rect x="0" y="4.6" width="7.1" height="1.3" fill="#b51812"/><rect x="0.2" y="0.1" width="1.6" height="1.2" fill="#da2a1c"/><rect x="2.75" y="0.4" width="1.6" height="1" fill="#da2a1c"/><rect x="5.3" y="0" width="1.6" height="1.2" fill="#da2a1c"/></svg>
<div class="t" style="left:320px;top:379.48px;font-size:6.35px;font-weight:normal;color:#333;">Flash Manufacturing PMI</div>
<svg class="a" style="left:522px;top:380.475px" width="8" height="7" viewBox="0 0 8 7"><path d="M0.3 0.3 H3 L3.8 1.3 H7.5 V6.6 H0.3Z" fill="#f7da80" stroke="#e4b85e" stroke-width="0.5"/><rect x="0.8" y="3.5" width="6.3" height="2" fill="#fdecb0"/></svg>
<div class="t" style="left:457.4px;width:300px;text-align:center;top:379.48px;font-size:6.6px;font-weight:normal;color:#333;">47.0</div>
<div class="t" style="left:499.5px;width:300px;text-align:center;top:379.48px;font-size:6.6px;font-weight:normal;color:#c9483b;">47.3</div>
<svg class="a" style="left:658.3px;top:381.875px" width="3" height="3.6" viewBox="0 0 3 3.6"><polygon points="3,0 3,3.6 0,1.8" fill="#f0a030"/></svg>
<svg class="a" style="left:680px;top:379.375px" width="8.5" height="9" viewBox="0 0 8.5 9"><rect x="0" y="2" width="2" height="5" fill="#e8685a"/><rect x="2.1" y="0" width="3.7" height="7" fill="#6a9ae8"/><rect x="5.8" y="3.9" width="2.2" height="3.1" fill="#6ab04a"/><rect x="0" y="6.2" width="8" height="0.8" fill="#2a3ab0"/><rect x="0" y="8.4" width="8" height="0.5" fill="#e2e5ee"/></svg>
<svg class="a" style="left:237.5px;top:394.925px" width="5" height="7" viewBox="0 0 5 7"><path d="M0.9 1.2 Q2.5 3.2 0.9 5.4" stroke="#9aa6c2" stroke-width="0.9" fill="none"/><path d="M2.4 0.4 Q5 3.2 2.4 6.2" stroke="#9aa6c2" stroke-width="0.9" fill="none"/></svg>
<div class="t" style="left:112.10000000000002px;width:300px;text-align:center;top:393.73px;font-size:6.6px;font-weight:normal;color:#333;">USD</div>
<svg class="a" style="left:290.9px;top:395.625px" width="7.1" height="5.9" viewBox="0 0 7.1 5.9"><rect x="0" y="1" width="7.1" height="4.9" fill="#da2a1c"/><rect x="0" y="4.6" width="7.1" height="1.3" fill="#b51812"/><rect x="0.2" y="0.1" width="1.6" height="1.2" fill="#da2a1c"/><rect x="2.75" y="0.4" width="1.6" height="1" fill="#da2a1c"/><rect x="5.3" y="0" width="1.6" height="1.2" fill="#da2a1c"/></svg>
<div class="t" style="left:320px;top:393.73px;font-size:6.35px;font-weight:normal;color:#333;">Flash Services PMI</div>
<svg class="a" style="left:522px;top:394.725px" width="8" height="7" viewBox="0 0 8 7"><path d="M0.3 0.3 H3 L3.8 1.3 H7.5 V6.6 H0.3Z" fill="#f7da80" stroke="#e4b85e" stroke-width="0.5"/><rect x="0.8" y="3.5" width="6.3" height="2" fill="#fdecb0"/></svg>
<div class="t" style="left:457.4px;width:300px;text-align:center;top:393.73px;font-size:6.6px;font-weight:normal;color:#333;">50.3</div>
<div class="t" style="left:499.5px;width:300px;text-align:center;top:393.73px;font-size:6.6px;font-weight:normal;color:#333;">50.6</div>
<svg class="a" style="left:658.3px;top:396.125px" width="3" height="3.6" viewBox="0 0 3 3.6"><polygon points="3,0 3,3.6 0,1.8" fill="#f0a030"/></svg>
<svg class="a" style="left:680px;top:393.625px" width="8.5" height="9" viewBox="0 0 8.5 9"><rect x="0" y="2" width="2" height="5" fill="#e8685a"/><rect x="2.1" y="0" width="3.7" height="7" fill="#6a9ae8"/><rect x="5.8" y="3.9" width="2.2" height="3.1" fill="#6ab04a"/><rect x="0" y="6.2" width="8" height="0.8" fill="#2a3ab0"/><rect x="0" y="8.4" width="8" height="0.5" fill="#e2e5ee"/></svg>
<div class="a" style="left:186.6px;top:405.05px;width:508.19999999999993px;height:0.8px;background:#e6e8ee;"></div>
<div class="t" style="left:61.900000000000006px;width:300px;text-align:center;top:407.98px;font-size:6.6px;font-weight:normal;color:#333;">10:00am</div>
<svg class="a" style="left:237.5px;top:409.175px" width="5" height="7" viewBox="0 0 5 7"><path d="M0.9 1.2 Q2.5 3.2 0.9 5.4" stroke="#9aa6c2" stroke-width="0.9" fill="none"/><path d="M2.4 0.4 Q5 3.2 2.4 6.2" stroke="#9aa6c2" stroke-width="0.9" fill="none"/></svg>
<div class="t" style="left:112.10000000000002px;width:300px;text-align:center;top:407.98px;font-size:6.6px;font-weight:normal;color:#333;">EUR</div>
<svg class="a" style="left:290.9px;top:409.875px" width="7.1" height="5.9" viewBox="0 0 7.1 5.9"><rect x="0" y="1" width="7.1" height="4.9" fill="#f4dc48"/><rect x="0" y="4.6" width="7.1" height="1.3" fill="#dcc035"/><rect x="0.2" y="0.1" width="1.6" height="1.2" fill="#f4dc48"/><rect x="2.75" y="0.4" width="1.6" height="1" fill="#f4dc48"/><rect x="5.3" y="0" width="1.6" height="1.2" fill="#f4dc48"/></svg>
<div class="t" style="left:320px;top:407.98px;font-size:6.35px;font-weight:normal;color:#333;">Belgian NBB Business Climate</div>
<svg class="a" style="left:522px;top:408.975px" width="8" height="7" viewBox="0 0 8 7"><path d="M0.3 0.3 H3 L3.8 1.3 H7.5 V6.6 H0.3Z" fill="#f7da80" stroke="#e4b85e" stroke-width="0.5"/><rect x="0.8" y="3.5" width="6.3" height="2" fill="#fdecb0"/></svg>
<div class="t" style="left:457.4px;width:300px;text-align:center;top:407.98px;font-size:6.6px;font-weight:normal;color:#333;">-12.5</div>
<div class="t" style="left:499.5px;width:300px;text-align:center;top:407.98px;font-size:6.6px;font-weight:normal;color:#333;">-12.8</div>
<svg class="a" style="left:680px;top:407.875px" width="8.5" height="9" viewBox="0 0 8.5 9"><rect x="0" y="2" width="2" height="5" fill="#e8685a"/><rect x="2.1" y="0" width="3.7" height="7" fill="#6a9ae8"/><rect x="5.8" y="3.9" width="2.2" height="3.1" fill="#6ab04a"/><rect x="0" y="6.2" width="8" height="0.8" fill="#2a3ab0"/><rect x="0" y="8.4" width="8" height="0.5" fill="#e2e5ee"/></svg>
<div class="a" style="left:186.6px;top:419.3px;width:508.19999999999993px;height:0.8px;background:#e6e8ee;"></div>
<div class="t" style="left:61.900000000000006px;width:300px;text-align:center;top:422.23px;font-size:6.6px;font-weight:normal;color:#333;">10:30am</div>
<svg class="a" style="left:237.5px;top:423.425px" width="5" height="7" viewBox="0 0 5 7"><path d="M0.9 1.2 Q2.5 3.2 0.9 5.4" stroke="#9aa6c2" stroke-width="0.9" fill="none"/><path d="M2.4 0.4 Q5 3.2 2.4 6.2" stroke="#9aa6c2" stroke-width="0.9" fill="none"/></svg>
<div class="t" style="left:112.10000000000002px;width:300px;text-align:center;top:422.23px;font-size:6.6px;font-weight:normal;color:#333;">GBP</div>
<svg class="a" style="left:290.9px;top:424.125px" width="7.1" height="5.9" viewBox="0 0 7.1 5.9"><rect x="0" y="1" width="7.1" height="4.9" fill="#f4dc48"/><rect x="0" y="4.6" width="7.1" height="1.3" fill="#dcc035"/><rect x="0.2" y="0.1" width="1.6" height="1.2" fill="#f4dc48"/><rect x="2.75" y="0.4" width="1.6" height="1" fill="#f4dc48"/><rect x="5.3" y="0" width="1.6" height="1.2" fill="#f4dc48"/></svg>
<div class="t" style="left:320px;top:422.23px;font-size:6.35px;font-weight:normal;color:#333;">MPC Member Mann Speaks</div>
<svg class="a" style="left:522px;top:423.225px" width="8" height="7" viewBox="0 0 8 7"><path d="M0.3 0.3 H3 L3.8 1.3 H7.5 V6.6 H0.3Z" fill="#f7da80" stroke="#e4b85e" stroke-width="0.5"/><rect x="0.8" y="3.5" width="6.3" height="2" fill="#fdecb0"/></svg>
<div class="a" style="left:148.8px;top:433.55px;width:546.0px;height:10.149999999999977px;background:#e6e8ed;border-top:1px solid #dcdfe6;"></div>
<svg class="a" style="left:153.7px;top:435.2px" width="4" height="6" viewBox="0 0 4 6"><path d="M2 0.5 V4.5 M0.5 3 L2 5 L3.5 3 M0.3 5.6 H3.7" stroke="#5b72a8" stroke-width="0.8" fill="none"/></svg>
<div class="t" style="left:158.6px;top:434.70px;font-size:6.5px;font-weight:normal;color:#5b72a8;">More</div>
<div class="a" style="left:148.8px;top:451.8px;width:269.0px;height:47.19999999999999px;background:#f3f4f8;"></div>
<div class="a" style="left:148.8px;top:451.8px;width:269.0px;height:11.699999999999989px;background:linear-gradient(#3d5388,#34497e);border-top:1px solid #223f7a;"></div>
<div class="a" style="left:148.8px;top:451.8px;width:80.19999999999999px;height:11.699999999999989px;background:linear-gradient(#5972ae,#5169a6);border-top:1px solid #3a5290;"></div>
<svg class="a" style="left:224.5px;top:459px" width="4.5" height="4.5" viewBox="0 0 3 3"><polygon points="3,0 3,3 0,3" fill="#5cb531"/></svg>
<div class="t" style="left:154.1px;top:453.40px;font-size:6.7px;font-weight:bold;color:#fff;">Forums / Last Replied</div>
<svg class="a" style="left:153.9px;top:470px" width="6.2" height="6.8" viewBox="0 0 6.2 6.8"><rect x="0" y="0" width="6.2" height="6.8" fill="#c8c8c8"/><g fill="#f0f0f0"><rect x="0.8" y="1.2" width="4.6" height="0.7"/><rect x="0.8" y="2.9" width="4.6" height="0.7"/><rect x="0.8" y="4.6" width="4.6" height="0.7"/></g></svg>
<div class="t" style="left:162px;top:469.00px;font-size:6.6px;font-weight:bold;color:#2d4485;text-decoration:underline;text-decoration-color:#7486b8;">Cable Update (GBPUSD)</div>
<svg class="a" style="left:153.9px;top:478.9px" width="30" height="9" viewBox="0 0 30 9"><circle cx="4.6" cy="4" r="4" fill="#1e1e1e"/><path d="M2.6 5.8 C3.2 3 5.4 2.2 6.4 3.2 C7 4 5.2 4.8 4 5.4 L6.6 5.6" stroke="#9a9a9a" stroke-width="0.9" fill="none"/><polygon points="9.6,3.6 12.8,2.1 12.8,5.2 9.6,6.6" fill="#ec4a3c"/><circle cx="19.7" cy="4" r="4.1" fill="#c21f28"/><circle cx="19.7" cy="4" r="2.6" fill="#f3ede6"/><circle cx="19.7" cy="4.1" r="1.3" fill="#4d5b34"/><polygon points="25,3.6 28.1,2.1 28.1,5.2 25,6.6" fill="#ec4a3c"/></svg>
<div class="t" style="left:184.5px;top:478.80px;font-size:6.4px;font-weight:normal;color:#8a8a8a;">leads</div>
<div class="t" style="left:203.3px;top:478.80px;font-size:6.4px;font-weight:normal;color:#b0b0b0;">|</div>
<div class="t" style="left:208.8px;top:478.80px;font-size:6.5px;font-weight:normal;color:#8a8a8a;text-decoration:underline;text-decoration-color:#b4b4b4;">Interactive Trading</div>
<div class="t" style="left:266.5px;top:478.80px;font-size:6.4px;font-weight:normal;color:#b0b0b0;">|</div>
<div class="t" style="left:272.6px;top:478.80px;font-size:6.5px;font-weight:normal;color:#8a8a8a;">737,709 replies</div>
<div class="t" style="left:153.5px;top:488.70px;font-size:6.6px;font-weight:normal;color:#7b86a8;text-decoration:underline;text-decoration-color:#a8b0c8;">OperanivFx replied &lt; 1 min ago</div>
<svg class="a" style="left:248px;top:491.5px" width="4" height="3" viewBox="0 0 4 3"><polygon points="0,0 4,0 2,3" fill="#5cb531"/></svg>
<div class="t" style="left:255.5px;top:488.70px;font-size:6.4px;font-weight:normal;color:#333;">stop lose in advance</div>
<svg class="a" style="left:317.5px;top:489.5px" width="4" height="5" viewBox="0 0 4 5"><path d="M0.3 4.7 L1.6 2.8 M1 2 L3 0.3 L3.7 1 L2 3Z" stroke="#e23" stroke-width="0.9" fill="#e23"/></svg>
<div class="a" style="left:426px;top:451.8px;width:268.79999999999995px;height:47.19999999999999px;background:#f3f4f8;"></div>
<div class="a" style="left:426px;top:451.8px;width:268.79999999999995px;height:11.699999999999989px;background:linear-gradient(#3d5388,#34497e);border-top:1px solid #223f7a;"></div>
<div class="a" style="left:426px;top:451.8px;width:78.69999999999999px;height:11.699999999999989px;background:linear-gradient(#5972ae,#5169a6);border-top:1px solid #3a5290;"></div>
<svg class="a" style="left:500.2px;top:459px" width="4.5" height="4.5" viewBox="0 0 3 3"><polygon points="3,0 3,3 0,3" fill="#5cb531"/></svg>
<div class="t" style="left:430.5px;top:453.40px;font-size:6.7px;font-weight:bold;color:#fff;">News / Latest Stories</div>
<div class="a" style="left:642.4px;top:451.8px;width:52.39999999999998px;height:11.699999999999989px;background:linear-gradient(#4d64a0,#465d99);border-top:1px solid #3a5290;"></div>
<div class="a" style="left:655.9px;top:452.8px;width:0.8px;height:10.699999999999989px;background:#3b5190;"></div>
<svg class="a" style="left:646.5px;top:454.3px" width="5" height="7" viewBox="0 0 5 7"><path d="M0.9 1.2 Q2.5 3.2 0.9 5.4" stroke="#dfe4f0" stroke-width="0.9" fill="none"/><path d="M2.4 0.4 Q5 3.2 2.4 6.2" stroke="#dfe4f0" stroke-width="0.9" fill="none"/></svg>
<div class="a" style="left:661.6px;top:454.3px;width:6.4px;height:6.2px;background:#fff;"></div>
<div class="t" style="left:668.5px;top:453.40px;font-size:6.6px;font-weight:normal;color:#fff;">Stream</div>
<svg class="a" style="left:430px;top:469.7px" width="6" height="6.5" viewBox="0 0 6 6.5"><rect x="0" y="0" width="6" height="6.5" fill="#c0c0c0"/><rect x="0.8" y="0.8" width="4.4" height="4.9" fill="#e4e4e4"/><rect x="1.2" y="1.5" width="3.6" height="0.6" fill="#aaa"/><rect x="1.2" y="3" width="3.6" height="0.6" fill="#aaa"/></svg>
<div class="t" style="left:438.8px;top:469.00px;font-size:6.62px;font-weight:bold;color:#2d4485;text-decoration:underline;text-decoration-color:#7486b8;">Hackers Breached UK Pension Protection Fund, Stole Employee Data</div>
<div class="t" style="left:430.4px;top:478.00px;font-size:6.4px;font-weight:normal;color:#8a8a8a;text-decoration:underline;text-decoration-color:#b4b4b4;">From bnnbloomberg.ca</div>
<div class="t" style="left:500.3px;top:478.00px;font-size:6.4px;font-weight:normal;color:#b0b0b0;">|</div>
<div class="t" style="left:506px;top:478.00px;font-size:6.6px;font-weight:normal;color:#8a8a8a;">3 min ago</div>
<div class="a" style="left:427px;top:488.2px;width:266.79999999999995px;height:0.8px;background:#e0e3ea;"></div>
<svg class="a" style="left:430px;top:494px" width="6" height="6.5" viewBox="0 0 6 6.5"><rect x="0" y="0" width="6" height="6.5" fill="#c0c0c0"/><rect x="0.8" y="0.8" width="4.4" height="4.9" fill="#e4e4e4"/></svg>
<div class="t" style="left:438.8px;top:493.20px;font-size:6.77px;font-weight:bold;color:#2d4485;text-decoration:underline;text-decoration-color:#7486b8;">US: Durable Goods Orders decline by 1% in February vs. +0.6% expected</div>
<div class="a" style="left:306.2px;top:41.8px;width:155.2px;height:24.8px;background:rgba(48,48,50,0.87);border:0.8px solid rgba(15,15,18,0.7);border-radius:1px;"></div>
<div class="t" style="left:326.2px;top:50.20px;font-size:7.1px;font-weight:bold;color:#f2f2f2;">Press</div>
<div class="a" style="left:349.6px;top:45.5px;width:26.3px;height:17.2px;background:rgba(0,0,0,0.15);border:1.2px solid #c4c4c4;border-radius:2px;"></div>
<div class="t" style="left:352.3px;top:50.20px;font-size:7.3px;font-weight:bold;color:#f2f2f2;">(fn) F</div>
<div class="t" style="left:379.4px;top:50.20px;font-size:7.45px;font-weight:bold;color:#f2f2f2;">to exit full screen</div>
</body></html>
